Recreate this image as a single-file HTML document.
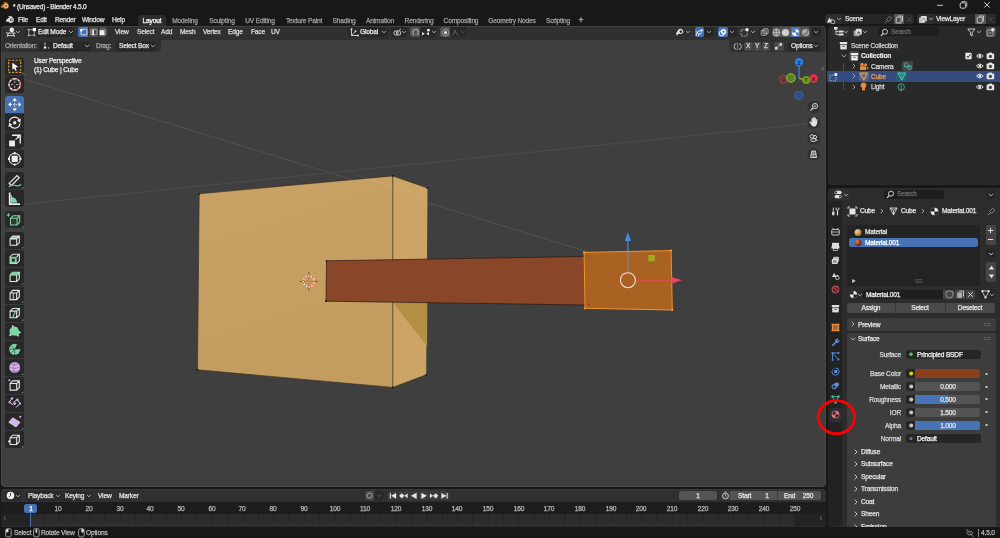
<!DOCTYPE html>
<html><head><meta charset="utf-8">
<style>
*{margin:0;padding:0;box-sizing:border-box}
html,body{width:1000px;height:538px;overflow:hidden;background:#181818;font-family:"Liberation Sans",sans-serif}
.a{position:absolute}
.t{position:absolute;white-space:nowrap;line-height:1;color:#e0e0e0;-webkit-text-stroke:0.25px currentColor;will-change:transform}
svg{position:absolute;overflow:visible}
</style></head><body>
<svg style="left:0px;top:0.2px;" width="9.8" height="9.8" viewBox="0 0 9.8 9.8"><g transform="scale(0.9800000000000001)"><path d="M1 6.2 L5 3 L3 3 L4 2.2 L6.6 2.4 L8.6 4.5 A3 3 0 1 1 3.2 7.4 L1.6 8.5 Z" fill="#e87d0d"/><circle cx="6.3" cy="6" r="1.8" fill="#fff"/><circle cx="6.3" cy="6" r="1.1" fill="#265787"/></g></svg>
<div class="t" style="left:12.50px;top:4.04px;font-size:6.44px;letter-spacing:-0.168px;color:#e8e8e8;">* (Unsaved) - Blender 4.5.0</div>
<svg style="left:936px;top:1.2px;" width="60" height="8" viewBox="0 0 60 8"><path d="M1.2 4.3 H7" stroke="#e0e0e0" stroke-width="0.9"/><rect x="24.2" y="1.8" width="5.4" height="5.4" rx="1.3" fill="none" stroke="#e0e0e0" stroke-width="0.9"/><path d="M25.6 0.6 H29.4 Q30.8 0.6 30.8 2 V5.8" fill="none" stroke="#e0e0e0" stroke-width="0.8"/><path d="M48.2 1.2 L53.6 6.6 M53.6 1.2 L48.2 6.6" stroke="#e0e0e0" stroke-width="0.9"/></svg>
<svg style="left:4.6px;top:13.6px;" width="9.8" height="9.8" viewBox="0 0 9.8 9.8"><g transform="scale(0.9800000000000001)"><path d="M1 6.2 L5 3 L3 3 L4 2.2 L6.6 2.4 L8.6 4.5 A3 3 0 1 1 3.2 7.4 L1.6 8.5 Z" fill="#e6e6e6"/><circle cx="6.3" cy="6" r="1.5" fill="#181818"/><circle cx="6.3" cy="6" r="0.8" fill="#e6e6e6"/></g></svg>
<div class="t" style="left:17.60px;top:16.76px;font-size:6.60px;letter-spacing:-0.172px;color:#e0e0e0;">File</div>
<div class="t" style="left:35.90px;top:16.76px;font-size:6.60px;letter-spacing:-0.172px;color:#e0e0e0;">Edit</div>
<div class="t" style="left:54.70px;top:16.76px;font-size:6.60px;letter-spacing:-0.172px;color:#e0e0e0;">Render</div>
<div class="t" style="left:81.60px;top:16.76px;font-size:6.60px;letter-spacing:-0.172px;color:#e0e0e0;">Window</div>
<div class="t" style="left:112.20px;top:16.76px;font-size:6.60px;letter-spacing:-0.172px;color:#e0e0e0;">Help</div>
<div class="a" style="left:138px;top:15px;width:28px;height:11px;background:#2c2c2c;border-radius:3px 3px 0 0;"></div>
<div class="t" style="left:2.00px;width:300px;text-align:center;top:18.06px;font-size:6.60px;letter-spacing:-0.172px;color:#ffffff;">Layout</div>
<div class="t" style="left:35.00px;width:300px;text-align:center;top:18.06px;font-size:6.60px;letter-spacing:-0.172px;color:#a0a0a0;">Modeling</div>
<div class="t" style="left:71.50px;width:300px;text-align:center;top:18.06px;font-size:6.60px;letter-spacing:-0.172px;color:#a0a0a0;">Sculpting</div>
<div class="t" style="left:110.00px;width:300px;text-align:center;top:18.06px;font-size:6.60px;letter-spacing:-0.172px;color:#a0a0a0;">UV Editing</div>
<div class="t" style="left:153.80px;width:300px;text-align:center;top:18.06px;font-size:6.60px;letter-spacing:-0.172px;color:#a0a0a0;">Texture Paint</div>
<div class="t" style="left:193.50px;width:300px;text-align:center;top:18.06px;font-size:6.60px;letter-spacing:-0.172px;color:#a0a0a0;">Shading</div>
<div class="t" style="left:230.00px;width:300px;text-align:center;top:18.06px;font-size:6.60px;letter-spacing:-0.172px;color:#a0a0a0;">Animation</div>
<div class="t" style="left:268.50px;width:300px;text-align:center;top:18.06px;font-size:6.60px;letter-spacing:-0.172px;color:#a0a0a0;">Rendering</div>
<div class="t" style="left:311.00px;width:300px;text-align:center;top:18.06px;font-size:6.60px;letter-spacing:-0.172px;color:#a0a0a0;">Compositing</div>
<div class="t" style="left:361.50px;width:300px;text-align:center;top:18.06px;font-size:6.60px;letter-spacing:-0.172px;color:#a0a0a0;">Geometry Nodes</div>
<div class="t" style="left:408.00px;width:300px;text-align:center;top:18.06px;font-size:6.60px;letter-spacing:-0.172px;color:#a0a0a0;">Scripting</div>
<div class="t" style="left:431.00px;width:300px;text-align:center;top:15.88px;font-size:8.52px;letter-spacing:-0.222px;color:#bdbdbd;">+</div>
<div class="a" style="left:824.5px;top:14px;width:89px;height:10px;background:#262626;border-radius:3px;"></div>
<div class="a" style="left:824.5px;top:14px;width:17px;height:10px;background:#2e2e2e;border-radius:3px 0 0 3px;"></div>
<svg style="left:826px;top:14.5px;" width="10" height="9" viewBox="0 0 10 9"><path d="M1 7.5 L3.2 2.5 L4.8 5 L5.8 3.8 L7 7.5 Z" fill="#ddd"/><circle cx="6.8" cy="6.8" r="1.9" fill="#262626" stroke="#ddd" stroke-width="0.8"/></svg>
<svg style="left:834.5px;top:15.3px;" width="8" height="8" viewBox="0 0 8 8"><path d="M2.4 3.2 L4 4.8 L5.6 3.2" fill="none" stroke="#ccc" stroke-width="0.8" stroke-linecap="round" stroke-linejoin="round"/></svg>
<svg style="left:884px;top:14.5px;" width="9" height="9" viewBox="0 0 9 9"><path d="M3 6 L1 8 M2.5 4.5 L4.5 6.5 L7.8 3.2 L5.8 1.2 Z" fill="none" stroke="#888" stroke-width="0.8"/></svg>
<div class="a" style="left:893.5px;top:14px;width:10.5px;height:10px;background:#545454;"></div>
<svg style="left:894.5px;top:14.5px;" width="9" height="9" viewBox="0 0 9 9"><rect x="1.2" y="2.2" width="5" height="5.8" rx="0.8" fill="none" stroke="#ddd" stroke-width="0.8"/><path d="M3 1 H7.5 V6.5" fill="none" stroke="#ddd" stroke-width="0.8"/></svg>
<div class="a" style="left:904px;top:14px;width:9.5px;height:10px;background:#2a2a2a;border-radius:0 3px 3px 0;"></div>
<svg style="left:904.5px;top:14.5px;" width="9" height="9" viewBox="0 0 9 9"><path d="M2.2 2.2 L6.8 6.8 M6.8 2.2 L2.2 6.8" stroke="#555" stroke-width="0.8"/></svg>
<div class="t" style="left:845.00px;top:15.96px;font-size:6.60px;letter-spacing:-0.172px;color:#e0e0e0;">Scene</div>
<div class="a" style="left:916.5px;top:14px;width:79px;height:10px;background:#262626;border-radius:3px;"></div>
<div class="a" style="left:916.5px;top:14px;width:17px;height:10px;background:#2e2e2e;border-radius:3px 0 0 3px;"></div>
<svg style="left:918px;top:14.5px;" width="10" height="9" viewBox="0 0 10 9"><rect x="1" y="2.5" width="6" height="5.5" rx="0.8" fill="#bbb"/><rect x="2.8" y="1" width="6" height="5.5" rx="0.8" fill="#ddd"/><path d="M3.5 5.5 L5.5 3.2 L8 5.5" fill="none" stroke="#555" stroke-width="0.8"/></svg>
<svg style="left:926.5px;top:15.3px;" width="8" height="8" viewBox="0 0 8 8"><path d="M2.4 3.2 L4 4.8 L5.6 3.2" fill="none" stroke="#ccc" stroke-width="0.8" stroke-linecap="round" stroke-linejoin="round"/></svg>
<div class="a" style="left:975px;top:14px;width:10.5px;height:10px;background:#545454;"></div>
<svg style="left:976px;top:14.5px;" width="9" height="9" viewBox="0 0 9 9"><rect x="1.2" y="2.2" width="5" height="5.8" rx="0.8" fill="none" stroke="#ddd" stroke-width="0.8"/><path d="M3 1 H7.5 V6.5" fill="none" stroke="#ddd" stroke-width="0.8"/></svg>
<div class="a" style="left:985.5px;top:14px;width:10px;height:10px;background:#2a2a2a;border-radius:0 3px 3px 0;"></div>
<svg style="left:986px;top:14.5px;" width="9" height="9" viewBox="0 0 9 9"><path d="M2.2 2.2 L6.8 6.8 M6.8 2.2 L2.2 6.8" stroke="#555" stroke-width="0.8"/></svg>
<div class="t" style="left:935.50px;top:15.96px;font-size:6.60px;letter-spacing:-0.172px;color:#e0e0e0;">ViewLayer</div>
<div class="a" style="left:1px;top:26px;width:825px;height:461px;background:#3f3f3f;border-radius:4px;overflow:hidden">
<div class="a" style="left:0px;top:0px;width:825px;height:13.5px;background:#303030;"></div>
<div class="a" style="left:0px;top:0px;width:825px;height:0.8px;background:#383838;"></div>
<div class="a" style="left:0px;top:13px;width:160px;height:13px;background:#303030;border-radius:0 0 4px 0;"></div>
<div class="a" style="left:728px;top:13px;width:97px;height:13px;background:#303030;border-radius:0 0 0 4px;"></div>
</div>
<svg style="left:0;top:0" width="1000" height="538" viewBox="0 0 1000 538"><line x1="25" y1="79.4" x2="600" y2="255.6" stroke="#555" stroke-width="0.8"/><line x1="1" y1="206.5" x2="825" y2="122.1" stroke="#4f4f4f" stroke-width="0.8"/><defs><linearGradient id="cf" x1="0" y1="0" x2="0.3" y2="1"><stop offset="0" stop-color="#c9a265"/><stop offset="1" stop-color="#c39d60"/></linearGradient></defs><polygon points="199.2,193.8 392.8,175.9 392.8,387.4 197.5,369.8" fill="url(#cf)"/><polygon points="392.8,175.9 427.5,188 426.2,374.8 392.8,387.4" fill="#cca466"/><polygon points="392.8,302.5 427.3,302.5 427.1,346 " fill="#b38e45"/><g stroke="#3a2e1c" stroke-width="0.7" fill="none" opacity="0.9"><polyline points="199.2,193.8 392.8,175.9 427.5,188"/><polyline points="197.5,369.8 392.8,387.4 426.2,374.8"/><line x1="392.8" y1="175.9" x2="392.8" y2="387.4"/><line x1="199.2" y1="193.8" x2="197.5" y2="369.8"/></g><g fill="#111"><circle cx="199.2" cy="193.8" r="0.9"/><circle cx="392.8" cy="175.9" r="0.9"/><circle cx="427.5" cy="188" r="0.9"/><circle cx="197.5" cy="369.8" r="0.9"/><circle cx="392.8" cy="387.4" r="0.9"/><circle cx="426.2" cy="374.8" r="0.9"/></g><line x1="356" y1="175" x2="427.5" y2="197" stroke="#fff" stroke-width="0.6" opacity="0.12"/><polygon points="326.5,260.8 584.5,256.5 585,305 326,301.2" fill="#8a4629"/><g stroke="#2a1a10" stroke-width="0.7" fill="none"><line x1="326.5" y1="260.8" x2="584.5" y2="256.5"/><line x1="326" y1="301.2" x2="585" y2="305"/><line x1="326.5" y1="260.8" x2="326" y2="301.2"/></g><g fill="#111"><circle cx="326.5" cy="260.8" r="0.9"/><circle cx="326" cy="301.2" r="0.9"/></g><polygon points="584.1,252.4 671.1,250.6 672.3,310 585,308.3" fill="#aa6222" stroke="#f39228" stroke-width="1"/><g fill="#ff9a30"><circle cx="584.1" cy="252.4" r="1.1"/><circle cx="671.1" cy="250.6" r="1.1"/><circle cx="672.3" cy="310" r="1.1"/><circle cx="585" cy="308.3" r="1.1"/></g><circle cx="588.5" cy="256" r="0.5" fill="#222"/><circle cx="589" cy="304.5" r="0.5" fill="#222"/><rect x="648.2" y="255" width="6.8" height="6.2" fill="#a2a61c"/><line x1="627.9" y1="272" x2="627.9" y2="240" stroke="#6b8fd6" stroke-width="1"/><polygon points="627.9,232 624.8,241 631,241" fill="#3d8ce8"/><line x1="636" y1="280.2" x2="672" y2="280.2" stroke="#e84a5f" stroke-width="1"/><polygon points="682,280.2 671.5,277 671.5,283.4" fill="#ec4660"/><circle cx="627.9" cy="280.2" r="7.5" fill="none" stroke="#ecdcd8" stroke-width="1.1"/><g><path d="M308.8 272 V277.5 M308.8 285.3 V291 M299.6 281.4 H304.8 M312.8 281.4 H318" stroke="#5e4a2a" stroke-width="0.8"/><path d="M308.8 277.5 V285.3 M304.8 281.4 H312.8" stroke="#5e4a2a" stroke-width="0.5" opacity="0.6"/><circle cx="308.8" cy="281.4" r="5.4" fill="none" stroke="#f4f0ec" stroke-width="1.3"/><circle cx="308.8" cy="281.4" r="5.4" fill="none" stroke="#e8552a" stroke-width="1.3" stroke-dasharray="1.41 1.41"/><circle cx="308.8" cy="281.4" r="1" fill="#f08a20"/></g><line x1="799" y1="78.5" x2="799" y2="66" stroke="#3f83e0" stroke-width="1.2"/><line x1="799" y1="78.5" x2="810" y2="78.5" stroke="#e0405a" stroke-width="1.2"/><line x1="799" y1="78.5" x2="803" y2="79.5" stroke="#80c020" stroke-width="1.2"/><circle cx="783.7" cy="79.2" r="4" fill="#5a3a3f" stroke="#c23a4a" stroke-width="0.9"/><circle cx="798.7" cy="95.3" r="4.1" fill="#2f5182" stroke="#3a6cb8" stroke-width="0.8"/><circle cx="790.9" cy="78" r="4.3" fill="#5e7a2e" stroke="#8ccf1a" stroke-width="1"/><circle cx="806.2" cy="80" r="4" fill="#6aa01a"/><circle cx="813.6" cy="78.5" r="4.2" fill="#e2334f"/><circle cx="799" cy="62.2" r="4.2" fill="#2f7fe0"/><text x="813.6" y="80.8" font-size="6" font-family="Liberation Sans" font-weight="bold" fill="#3a0a10" text-anchor="middle">X</text><text x="806.2" y="82.2" font-size="5.5" font-family="Liberation Sans" font-weight="bold" fill="#1f3000" text-anchor="middle">Y</text><text x="799" y="64.5" font-size="6" font-family="Liberation Sans" font-weight="bold" fill="#0a1a30" text-anchor="middle">Z</text><circle cx="813.6" cy="107.2" r="6.2" fill="#2f2f2f" opacity="0.85"/><circle cx="813.6" cy="122.6" r="6.2" fill="#2f2f2f" opacity="0.85"/><circle cx="813.6" cy="138.3" r="6.2" fill="#2f2f2f" opacity="0.85"/><circle cx="813.6" cy="154.3" r="6.2" fill="#2f2f2f" opacity="0.85"/><circle cx="815" cy="106" r="2.6" fill="none" stroke="#ddd" stroke-width="0.9"/><line x1="813" y1="108" x2="810.5" y2="110.5" stroke="#ddd" stroke-width="1.1"/><path d="M815 104.7 V107.3 M813.7 106 H816.3" stroke="#ddd" stroke-width="0.6"/><path d="M811.2 124.8 L809.6 122.4 Q809.2 121.4 810.2 121.3 L811.5 122.6 L811.5 118.6 Q811.7 117.8 812.4 118 Q812.9 118.2 812.9 118.8 L813 121.2 L813 117.6 Q813.3 116.9 813.9 117 Q814.4 117.2 814.4 117.8 L814.4 121.2 L814.6 118.1 Q814.9 117.4 815.5 117.6 Q815.9 117.8 815.9 118.4 L815.9 121.6 L816.3 119.4 Q816.7 118.8 817.2 119 Q817.6 119.3 817.5 119.9 L817 124 Q816.4 126.6 814 126.8 Q812.3 126.8 811.2 124.8 Z" fill="#e0e0e0"/><circle cx="812" cy="136.5" r="1.8" fill="none" stroke="#ddd" stroke-width="0.9"/><circle cx="815" cy="137" r="1.6" fill="none" stroke="#ddd" stroke-width="0.9"/><rect x="811" y="138.8" width="4.5" height="2.6" rx="0.6" fill="none" stroke="#ddd" stroke-width="0.9"/><path d="M815.5 140.1 L817.2 139 V141.3 Z" fill="#ddd"/><path d="M810.6 157.5 L811.8 151 H815.4 L816.6 157.5 Z" fill="none" stroke="#ddd" stroke-width="0.9"/><path d="M811.2 154.2 H816 M813.6 151 V157.5 M812.4 151 L812 157.5 M814.8 151 L815.2 157.5" stroke="#ddd" stroke-width="0.6"/><path d="M823.8 66.8 L822 68.6 L823.8 70.4" fill="none" stroke="#9a9a9a" stroke-width="0.8"/></svg>
<div class="a" style="left:1px;top:26px;width:825px;height:461px;border:1px solid rgba(255,255,255,0.055);border-radius:4px"></div>
<div class="t" style="left:33.90px;top:57.96px;font-size:6.60px;letter-spacing:-0.172px;color:#f0f0f0;">User Perspective</div>
<div class="t" style="left:33.90px;top:67.26px;font-size:6.60px;letter-spacing:-0.172px;color:#f0f0f0;">(1) Cube | Cube</div>
<svg style="left:5px;top:27px;" width="16" height="10" viewBox="0 0 16 10"><circle cx="6.8" cy="2.9" r="2.3" fill="#e6e6e6"/><path d="M1 6 H10.5 M2.2 8.6 H9.6 M3.4 6 L2.2 9.8 M8.2 6 L9.4 9.8" stroke="#e6e6e6" stroke-width="0.9" fill="none"/></svg>
<svg style="left:13.5px;top:28.299999999999997px;" width="8" height="8" viewBox="0 0 8 8"><path d="M2.2 3.1 L4 4.9 L5.8 3.1" fill="none" stroke="#ccc" stroke-width="0.8" stroke-linecap="round" stroke-linejoin="round"/></svg>
<div class="a" style="left:24.8px;top:27px;width:49.6px;height:10px;background:#272727;border-radius:2.5px;"></div>
<svg style="left:27px;top:27.5px;" width="9" height="9" viewBox="0 0 9 9"><rect x="1.6" y="1.6" width="5.8" height="5.8" rx="2.4" fill="none" stroke="#a8a8a8" stroke-width="0.9"/><circle cx="1.6" cy="7.4" r="1.1" fill="#a8a8a8"/><circle cx="1.6" cy="1.6" r="1.1" fill="#a8a8a8"/><circle cx="7.4" cy="7.4" r="1.1" fill="#a8a8a8"/><rect x="5.8" y="0" width="3.2" height="3.2" fill="#fff"/></svg>
<div class="t" style="left:37.60px;top:28.96px;font-size:6.60px;letter-spacing:-0.172px;color:#e6e6e6;">Edit Mode</div>
<svg style="left:66.5px;top:28.299999999999997px;" width="8" height="8" viewBox="0 0 8 8"><path d="M2.2 3.1 L4 4.9 L5.8 3.1" fill="none" stroke="#ccc" stroke-width="0.8" stroke-linecap="round" stroke-linejoin="round"/></svg>
<div class="a" style="left:78.4px;top:27px;width:29.1px;height:10px;background:#4a4a4a;border-radius:2.5px;"></div>
<div class="a" style="left:78.4px;top:27px;width:9.5px;height:10px;background:#4772b3;border-radius:2.5px 0 0 2.5px;"></div>
<div class="a" style="left:88px;top:27px;width:0.6px;height:10px;background:#303030;"></div>
<div class="a" style="left:97.8px;top:27px;width:0.6px;height:10px;background:#303030;"></div>
<svg style="left:79.5px;top:28px;" width="8" height="8" viewBox="0 0 8 8"><rect x="1" y="1.3" width="6" height="5.5" rx="0.8" fill="none" stroke="#e8eef8" stroke-width="0.8"/><rect x="0.2" y="1.2" width="2.2" height="2.2" fill="#fff"/></svg>
<svg style="left:89.5px;top:28px;" width="8" height="8" viewBox="0 0 8 8"><rect x="1" y="1.3" width="6" height="5.5" rx="0.8" fill="none" stroke="#bbb" stroke-width="0.8"/><rect x="2.4" y="2" width="1.5" height="5" fill="#fff"/></svg>
<svg style="left:99px;top:28px;" width="8" height="8" viewBox="0 0 8 8"><rect x="1.3" y="1" width="5.7" height="5.7" rx="0.8" fill="none" stroke="#888" stroke-width="0.8"/><rect x="0.6" y="2.2" width="5" height="5" fill="#eee"/></svg>
<div class="t" style="left:115.00px;top:28.96px;font-size:6.60px;letter-spacing:-0.172px;color:#dcdcdc;">View</div>
<div class="t" style="left:136.50px;top:28.96px;font-size:6.60px;letter-spacing:-0.172px;color:#dcdcdc;">Select</div>
<div class="t" style="left:160.60px;top:28.96px;font-size:6.60px;letter-spacing:-0.172px;color:#dcdcdc;">Add</div>
<div class="t" style="left:180.00px;top:28.96px;font-size:6.60px;letter-spacing:-0.172px;color:#dcdcdc;">Mesh</div>
<div class="t" style="left:202.80px;top:28.96px;font-size:6.60px;letter-spacing:-0.172px;color:#dcdcdc;">Vertex</div>
<div class="t" style="left:228.40px;top:28.96px;font-size:6.60px;letter-spacing:-0.172px;color:#dcdcdc;">Edge</div>
<div class="t" style="left:250.80px;top:28.96px;font-size:6.60px;letter-spacing:-0.172px;color:#dcdcdc;">Face</div>
<div class="t" style="left:270.80px;top:28.96px;font-size:6.60px;letter-spacing:-0.172px;color:#dcdcdc;">UV</div>
<div class="a" style="left:348px;top:27px;width:39.5px;height:10px;background:#272727;border-radius:2.5px;"></div>
<svg style="left:349.5px;top:27.5px;" width="9" height="9" viewBox="0 0 9 9"><path d="M1.5 1 V7.5 H8" fill="none" stroke="#ddd" stroke-width="0.9"/><path d="M1.5 7.5 L5.5 3.5" stroke="#ddd" stroke-width="0.8"/><circle cx="1.5" cy="1.2" r="1" fill="#ddd"/><circle cx="8" cy="7.5" r="1" fill="#ddd"/><circle cx="5.5" cy="3.3" r="1" fill="#ddd"/></svg>
<div class="t" style="left:360.40px;top:28.96px;font-size:6.60px;letter-spacing:-0.172px;color:#e6e6e6;">Global</div>
<svg style="left:380.3px;top:28.299999999999997px;" width="8" height="8" viewBox="0 0 8 8"><path d="M2.2 3.1 L4 4.9 L5.8 3.1" fill="none" stroke="#ccc" stroke-width="0.8" stroke-linecap="round" stroke-linejoin="round"/></svg>
<div class="a" style="left:391px;top:27px;width:16px;height:10px;background:#272727;border-radius:2.5px;"></div>
<svg style="left:392.5px;top:27.5px;" width="9" height="9" viewBox="0 0 9 9"><circle cx="3" cy="5" r="2.2" fill="none" stroke="#ddd" stroke-width="0.9"/><circle cx="5.6" cy="5" r="2.2" fill="none" stroke="#ddd" stroke-width="0.9"/><path d="M6 2.5 L8 0.8" stroke="#ddd" stroke-width="0.8"/></svg>
<svg style="left:399.6px;top:28.299999999999997px;" width="8" height="8" viewBox="0 0 8 8"><path d="M2.4 3.2 L4 4.8 L5.6 3.2" fill="none" stroke="#ccc" stroke-width="0.8" stroke-linecap="round" stroke-linejoin="round"/></svg>
<div class="a" style="left:410px;top:27px;width:26px;height:10px;background:#272727;border-radius:2.5px;"></div>
<div class="a" style="left:410px;top:27px;width:10px;height:10px;background:#545454;border-radius:2.5px 0 0 2.5px;"></div>
<svg style="left:410.8px;top:27.8px;" width="9" height="9" viewBox="0 0 9 9"><path d="M2 6.5 V4 A2.6 2.6 0 0 1 7.2 4 V6.5" fill="none" stroke="#9a9a9a" stroke-width="1.4"/><path d="M2 6.5 H3.2 M6 6.5 H7.2" stroke="#9a9a9a" stroke-width="1.4"/></svg>
<svg style="left:421px;top:27.5px;" width="10" height="9" viewBox="0 0 10 9"><path d="M1 4 L1 7.5 L3.8 5.7 Z M8 4 L8 7.5 L5.2 5.7 Z" fill="#e6e6e6"/><rect x="6.2" y="1" width="2.4" height="2.4" fill="#fff"/></svg>
<svg style="left:429.7px;top:28.299999999999997px;" width="8" height="8" viewBox="0 0 8 8"><path d="M2.4 3.2 L4 4.8 L5.6 3.2" fill="none" stroke="#ccc" stroke-width="0.8" stroke-linecap="round" stroke-linejoin="round"/></svg>
<div class="a" style="left:440px;top:27px;width:26px;height:10px;background:#272727;border-radius:2.5px;"></div>
<div class="a" style="left:440px;top:27px;width:10px;height:10px;background:#545454;border-radius:2.5px 0 0 2.5px;"></div>
<svg style="left:440.5px;top:27.5px;" width="9" height="9" viewBox="0 0 9 9"><circle cx="4.5" cy="4.5" r="3.2" fill="none" stroke="#aaa" stroke-width="0.8"/><circle cx="4.5" cy="4.5" r="1.5" fill="#eee"/></svg>
<svg style="left:451px;top:27.5px;" width="9" height="9" viewBox="0 0 9 9"><path d="M0.8 7.5 Q3 7.4 4 2 Q5 7.4 7.8 7.5" fill="none" stroke="#6a6a6a" stroke-width="0.8"/></svg>
<svg style="left:458.5px;top:28.299999999999997px;" width="8" height="8" viewBox="0 0 8 8"><path d="M2.4 3.2 L4 4.8 L5.6 3.2" fill="none" stroke="#555" stroke-width="0.8" stroke-linecap="round" stroke-linejoin="round"/></svg>
<svg style="left:675px;top:27px;" width="16" height="10" viewBox="0 0 16 10"><path d="M1 6.5 L3 3.2 Q4.5 1.4 6.5 2 Q8.8 2.8 8.2 5.2 Q7.6 7 5.3 7 L3.2 6.8 L2 9 Z" fill="#e6e6e6"/><circle cx="5.8" cy="4.6" r="1.3" fill="#303030"/></svg>
<svg style="left:684px;top:28.299999999999997px;" width="8" height="8" viewBox="0 0 8 8"><path d="M2.4 3.2 L4 4.8 L5.6 3.2" fill="none" stroke="#ccc" stroke-width="0.8" stroke-linecap="round" stroke-linejoin="round"/></svg>
<div class="a" style="left:694.8px;top:27px;width:9.6px;height:10px;background:#4772b3;border-radius:2px;"></div>
<svg style="left:695.3px;top:27.5px;" width="9" height="9" viewBox="0 0 9 9"><path d="M1.2 8 Q1.2 3 6.2 2.5 M3.4 8 Q3.5 5 6.8 5 M1 3.2 L3.8 6.6" fill="none" stroke="#e8f0ff" stroke-width="0.9"/><path d="M5.8 0.9 L8.3 2.2 L6.4 3.9 Z" fill="#fff"/></svg>
<div class="a" style="left:704.4px;top:27px;width:9.6px;height:10px;background:#272727;border-radius:0 2px 2px 0;"></div>
<svg style="left:705.2px;top:28.299999999999997px;" width="8" height="8" viewBox="0 0 8 8"><path d="M2.4 3.2 L4 4.8 L5.6 3.2" fill="none" stroke="#ccc" stroke-width="0.8" stroke-linecap="round" stroke-linejoin="round"/></svg>
<div class="a" style="left:718px;top:27px;width:9.6px;height:10px;background:#4772b3;border-radius:2px;"></div>
<svg style="left:718.3px;top:27.5px;" width="9" height="9" viewBox="0 0 9 9"><circle cx="5.6" cy="3.8" r="2.8" fill="#e8f0ff"/><circle cx="3.6" cy="5.4" r="2.5" fill="none" stroke="#e8f0ff" stroke-width="1"/><circle cx="5.6" cy="3.8" r="1" fill="#4772b3"/></svg>
<div class="a" style="left:727.6px;top:27px;width:9px;height:10px;background:#272727;border-radius:0 2px 2px 0;"></div>
<svg style="left:728.2px;top:28.299999999999997px;" width="8" height="8" viewBox="0 0 8 8"><path d="M2.4 3.2 L4 4.8 L5.6 3.2" fill="none" stroke="#ccc" stroke-width="0.8" stroke-linecap="round" stroke-linejoin="round"/></svg>
<svg style="left:739.6px;top:27.5px;" width="16" height="9" viewBox="0 0 16 9"><rect x="1" y="1.8" width="6.2" height="6.2" rx="0.6" fill="none" stroke="#bbb" stroke-width="0.9" stroke-dasharray="2 1"/><rect x="5.6" y="0.2" width="2.8" height="2.8" fill="#fff"/></svg>
<svg style="left:748.5px;top:28.299999999999997px;" width="8" height="8" viewBox="0 0 8 8"><path d="M2.4 3.2 L4 4.8 L5.6 3.2" fill="none" stroke="#ccc" stroke-width="0.8" stroke-linecap="round" stroke-linejoin="round"/></svg>
<div class="a" style="left:758.8px;top:27px;width:9.4px;height:10px;background:#272727;border-radius:2px;"></div>
<svg style="left:759.5px;top:27.5px;" width="9" height="9" viewBox="0 0 9 9"><rect x="1.2" y="2.4" width="5" height="5" rx="0.6" fill="none" stroke="#bbb" stroke-width="0.8"/><rect x="3" y="0.8" width="5" height="5" rx="0.6" fill="none" stroke="#ddd" stroke-width="0.8"/><rect x="3" y="2.4" width="3.2" height="3.4" fill="#888" opacity="0.6"/></svg>
<div class="a" style="left:771.6px;top:27px;width:38.4px;height:10px;background:#545454;border-radius:2.5px;"></div>
<div class="a" style="left:790.8px;top:27px;width:9.6px;height:10px;background:#4772b3;"></div>
<svg style="left:772px;top:27.5px;" width="9" height="9" viewBox="0 0 9 9"><circle cx="4.5" cy="4.5" r="3.4" fill="none" stroke="#ccc" stroke-width="0.8"/><path d="M1.1 4.5 H7.9 M4.5 1.1 V7.9" stroke="#ccc" stroke-width="0.7"/><ellipse cx="4.5" cy="4.5" rx="1.6" ry="3.4" fill="none" stroke="#ccc" stroke-width="0.6"/></svg>
<svg style="left:781.2px;top:27.5px;" width="9" height="9" viewBox="0 0 9 9"><circle cx="4.5" cy="4.5" r="3.6" fill="#d0d0d0"/></svg>
<svg style="left:791.2px;top:27.5px;" width="9" height="9" viewBox="0 0 9 9"><circle cx="4.5" cy="4.5" r="3.6" fill="#f0f4ff"/><path d="M4.5 0.9 A3.6 3.6 0 0 0 1 4.6 L4.5 4.5 Z" fill="#4772b3"/><path d="M4.5 4.5 L8.1 4.5 A3.6 3.6 0 0 1 6 7.8 Z" fill="#4772b3"/></svg>
<svg style="left:800.6px;top:27.5px;" width="9" height="9" viewBox="0 0 9 9"><circle cx="4.5" cy="4.5" r="3.6" fill="#a8a8a8"/><path d="M2.5 6.8 Q6.5 6 6.8 2.2" fill="none" stroke="#6a6a6a" stroke-width="1.2"/></svg>
<div class="a" style="left:811.6px;top:27px;width:9px;height:10px;background:#272727;border-radius:2px;"></div>
<svg style="left:812.1px;top:28.299999999999997px;" width="8" height="8" viewBox="0 0 8 8"><path d="M2.4 3.2 L4 4.8 L5.6 3.2" fill="none" stroke="#ccc" stroke-width="0.8" stroke-linecap="round" stroke-linejoin="round"/></svg>
<div class="t" style="left:4.80px;top:42.96px;font-size:6.60px;letter-spacing:-0.172px;color:#a8a8a8;">Orientation:</div>
<div class="a" style="left:40px;top:41.5px;width:50.4px;height:9px;background:#272727;border-radius:2.5px;"></div>
<svg style="left:42px;top:41.5px;" width="9" height="9" viewBox="0 0 9 9"><circle cx="3" cy="1.5" r="1" fill="#999"/><path d="M3 2 V5" stroke="#999" stroke-width="0.7"/><circle cx="3" cy="5.5" r="1.2" fill="#eee"/><circle cx="6.5" cy="5.8" r="0.9" fill="#999"/><path d="M1.5 7.5 L2.5 6.3" stroke="#999" stroke-width="0.7"/></svg>
<div class="t" style="left:52.80px;top:42.96px;font-size:6.60px;letter-spacing:-0.172px;color:#e6e6e6;">Default</div>
<svg style="left:83.2px;top:42.3px;" width="8" height="8" viewBox="0 0 8 8"><path d="M2.2 3.1 L4 4.9 L5.8 3.1" fill="none" stroke="#ccc" stroke-width="0.8" stroke-linecap="round" stroke-linejoin="round"/></svg>
<div class="t" style="left:95.70px;top:42.96px;font-size:6.60px;letter-spacing:-0.172px;color:#a8a8a8;">Drag:</div>
<div class="a" style="left:116px;top:41.5px;width:40px;height:9px;background:#272727;border-radius:2.5px;"></div>
<div class="t" style="left:119.20px;top:42.96px;font-size:6.60px;letter-spacing:-0.172px;color:#e6e6e6;">Select Box</div>
<svg style="left:148.8px;top:42.3px;" width="8" height="8" viewBox="0 0 8 8"><path d="M2.2 3.1 L4 4.9 L5.8 3.1" fill="none" stroke="#ccc" stroke-width="0.8" stroke-linecap="round" stroke-linejoin="round"/></svg>
<svg style="left:733px;top:41.5px;" width="10" height="9" viewBox="0 0 10 9"><path d="M4.7 1 V8" stroke="#bbb" stroke-width="0.6"/><path d="M3.5 1.5 Q0.8 2 1.2 4.5 Q0.8 7 3.5 7.5 M6 1.5 Q8.6 2 8.2 4.5 Q8.6 7 6 7.5" fill="none" stroke="#ccc" stroke-width="0.9"/></svg>
<div class="a" style="left:744px;top:41.5px;width:26px;height:9px;background:#4a4a4a;border-radius:2px;"></div>
<div class="a" style="left:752.6px;top:41.5px;width:0.6px;height:9px;background:#303030;"></div>
<div class="a" style="left:761.3px;top:41.5px;width:0.6px;height:9px;background:#303030;"></div>
<div class="t" style="left:598.30px;width:300px;text-align:center;top:42.96px;font-size:6.60px;letter-spacing:-0.172px;color:#ddd;">X</div>
<div class="t" style="left:607.00px;width:300px;text-align:center;top:42.96px;font-size:6.60px;letter-spacing:-0.172px;color:#ddd;">Y</div>
<div class="t" style="left:615.70px;width:300px;text-align:center;top:42.96px;font-size:6.60px;letter-spacing:-0.172px;color:#ddd;">Z</div>
<div class="a" style="left:774px;top:41.5px;width:9.6px;height:9px;background:#4a4a4a;border-radius:2px;"></div>
<svg style="left:774.3px;top:41.5px;" width="9" height="9" viewBox="0 0 9 9"><rect x="1" y="5" width="2.5" height="2.5" fill="#ddd"/><rect x="5.5" y="1.2" width="2.5" height="2.5" fill="#ddd"/><path d="M2.5 5 L6.5 3" stroke="#ddd" stroke-width="0.7" stroke-dasharray="1 0.7"/></svg>
<div class="a" style="left:787.6px;top:41.5px;width:32.8px;height:9px;background:#272727;border-radius:2.5px;"></div>
<div class="t" style="left:791.00px;top:42.96px;font-size:6.60px;letter-spacing:-0.172px;color:#e6e6e6;">Options</div>
<svg style="left:811.8px;top:42.3px;" width="8" height="8" viewBox="0 0 8 8"><path d="M2.2 3.1 L4 4.9 L5.8 3.1" fill="none" stroke="#ccc" stroke-width="0.8" stroke-linecap="round" stroke-linejoin="round"/></svg>
<div class="a" style="left:5.3px;top:57.7px;width:19px;height:35.3px;background:#282828;border-radius:3px;"></div>
<div class="a" style="left:5.3px;top:74.9px;width:19px;height:0.9px;background:#3a3a3a;"></div>
<div class="a" style="left:5.3px;top:96.0px;width:19px;height:71.5px;background:#282828;border-radius:3px;"></div>
<div class="a" style="left:5.3px;top:113.2px;width:19px;height:0.9px;background:#3a3a3a;"></div>
<div class="a" style="left:5.3px;top:131.3px;width:19px;height:0.9px;background:#3a3a3a;"></div>
<div class="a" style="left:5.3px;top:149.4px;width:19px;height:0.9px;background:#3a3a3a;"></div>
<div class="a" style="left:5.3px;top:172.2px;width:19px;height:35.3px;background:#282828;border-radius:3px;"></div>
<div class="a" style="left:5.3px;top:189.4px;width:19px;height:0.9px;background:#3a3a3a;"></div>
<div class="a" style="left:5.3px;top:211.3px;width:19px;height:17.2px;background:#282828;border-radius:3px;"></div>
<div class="a" style="left:5.3px;top:232.1px;width:19px;height:216.3px;background:#282828;border-radius:3px;"></div>
<div class="a" style="left:5.3px;top:249.3px;width:19px;height:0.9px;background:#3a3a3a;"></div>
<div class="a" style="left:5.3px;top:267.4px;width:19px;height:0.9px;background:#3a3a3a;"></div>
<div class="a" style="left:5.3px;top:285.5px;width:19px;height:0.9px;background:#3a3a3a;"></div>
<div class="a" style="left:5.3px;top:303.6px;width:19px;height:0.9px;background:#3a3a3a;"></div>
<div class="a" style="left:5.3px;top:321.7px;width:19px;height:0.9px;background:#3a3a3a;"></div>
<div class="a" style="left:5.3px;top:339.8px;width:19px;height:0.9px;background:#3a3a3a;"></div>
<div class="a" style="left:5.3px;top:357.9px;width:19px;height:0.9px;background:#3a3a3a;"></div>
<div class="a" style="left:5.3px;top:376.0px;width:19px;height:0.9px;background:#3a3a3a;"></div>
<div class="a" style="left:5.3px;top:394.1px;width:19px;height:0.9px;background:#3a3a3a;"></div>
<div class="a" style="left:5.3px;top:412.2px;width:19px;height:0.9px;background:#3a3a3a;"></div>
<div class="a" style="left:5.3px;top:430.3px;width:19px;height:0.9px;background:#3a3a3a;"></div>
<div class="a" style="left:5.3px;top:96.0px;width:19px;height:17.2px;background:#4772b3;border-radius:3px 3px 0 0;"></div>
<svg style="left:0;top:0" width="1000" height="538" viewBox="0 0 1000 538"><g transform="translate(14.7 66.30) scale(1.32)"><rect x="-4.6" y="-4.6" width="9.2" height="9.2" fill="none" stroke="#d99a3a" stroke-width="0.9" stroke-dasharray="1.6 1"/><path d="M-1.8 -2.6 L2.8 0.6 L0.6 0.9 L1.5 3 L0.5 3.4 L-0.4 1.4 L-1.8 2.6 Z" fill="#fff"/><path d="M7.5 6.8 L8.5 6.8 L8.5 5.8 Z" fill="#999"/></g><g transform="translate(14.7 84.40) scale(1.32)"><circle r="4.3" fill="none" stroke="#fff" stroke-width="1"/><circle r="4.3" fill="none" stroke="#e04040" stroke-width="1" stroke-dasharray="1.7 1.7"/><path d="M0 -2.8 V-1 M0 1 V2.8 M-2.8 0 H-1 M1 0 H2.8" stroke="#ccc" stroke-width="0.6"/></g><g transform="translate(14.7 104.60) scale(1.32)"><path d="M0 -3.2 V3.2 M-3.2 0 H3.2" stroke="#fff" stroke-width="0.6" stroke-dasharray="1.1 0.8"/><path d="M0 -5 L-1.7 -2.9 H1.7 Z M0 5 L-1.7 2.9 H1.7 Z M-5 0 L-2.9 -1.7 V1.7 Z M5 0 L2.9 -1.7 V1.7 Z" fill="#fff"/></g><g transform="translate(14.7 122.70) scale(1.32)"><path d="M-4 -0.6 A4 4 0 0 1 3.4 -2.2 M4 0.6 A4 4 0 0 1 -3.4 2.2" fill="none" stroke="#eee" stroke-width="0.9"/><path d="M4.6 -3.4 L4.3 0.2 L1.8 -1.6 Z M-4.6 3.4 L-4.3 -0.2 L-1.8 1.6 Z" fill="#eee"/><circle r="1.3" fill="#eee"/></g><g transform="translate(14.7 140.80) scale(1.32)"><rect x="-4.2" y="-0.2" width="4.4" height="4.4" fill="#eee"/><path d="M-2 -4.2 H4.2 V2" fill="none" stroke="#eee" stroke-width="1"/><path d="M0.6 -0.8 L3.2 -3.4" stroke="#eee" stroke-width="0.8"/><path d="M3.6 -3.6 L1.6 -3.4 L3.4 -1.6 Z" fill="#eee"/></g><g transform="translate(14.7 158.90) scale(1.32)"><circle r="4.3" fill="none" stroke="#ddd" stroke-width="0.8"/><g fill="#eee"><circle cx="0" cy="-4.3" r="0.9"/><circle cx="0" cy="4.3" r="0.9"/><circle cx="-4.3" cy="0" r="0.9"/><circle cx="4.3" cy="0" r="0.9"/></g><rect x="-2.3" y="-2.3" width="4.6" height="4.6" rx="0.5" fill="#eee"/></g><g transform="translate(14.7 180.80) scale(1.32)"><path d="M-4.2 2 L1.8 -4 L3.4 -2.4 L-2.6 3.6 Z" fill="none" stroke="#eee" stroke-width="0.9"/><path d="M-4.6 4.6 Q-1.6 2.4 0.6 3.6 Q2.6 4.6 4.8 2.8" fill="none" stroke="#7fd3a6" stroke-width="0.8"/></g><g transform="translate(14.7 198.90) scale(1.32)"><path d="M-3.8 -4.8 V4 H4" fill="none" stroke="#eee" stroke-width="1.3"/><path d="M-2.6 2.9 V-1.5 A4.4 4.4 0 0 1 1.8 2.9 Z" fill="#7fd3a6"/><path d="M-2.6 2.9 L-2.6 -3" stroke="#eee" stroke-width="0.6"/></g><g transform="translate(14.7 219.90) scale(1.32)"><path d="M-3.2 -1.2 L-1.2 -3.2 H3.8 V1.8 L1.8 3.8 H-3.2 Z" fill="#2c3a33" stroke="#7fd3a6" stroke-width="0.8"/><path d="M-3.2 -1.2 H1.8 V3.8 M1.8 -1.2 L3.8 -3.2" fill="none" stroke="#7fd3a6" stroke-width="0.8"/><path d="M-4.8 -5 V-2.4 M-6.1 -3.7 H-3.5" stroke="#7fd3a6" stroke-width="0.8"/></g><g transform="translate(14.7 240.70) scale(1.32)"><path d="M-3.5 -1 L-1.5 -3.5 H3.5 L1.5 -1 Z" fill="#7fd3a6"/><path d="M-3.5 0 L-3.5 -1.5 L-1.5 -3.5 H3.5 V1.5 L1.5 3.5 H-3.5 Z M-3.5 -1.5 H1.5 V3.5 M1.5 -1.5 L3.5 -3.5" fill="none" stroke="#e6e6e6" stroke-width="0.8"/></g><g transform="translate(14.7 258.80) scale(1.32)"><path d="M-3.5 -1.5 L-1.5 -3.5 H3.5 V1.5 L1.5 3.5 H-3.5 Z" fill="none" stroke="#e6e6e6" stroke-width="0.8"/><rect x="-3.5" y="-1.5" width="5" height="5" fill="#7fd3a6"/><rect x="-2.1" y="-0.1" width="2.2" height="2.2" fill="#282828"/><path d="M1.5 -1.5 L3.5 -3.5" stroke="#e6e6e6" stroke-width="0.8"/></g><g transform="translate(14.7 276.90) scale(1.32)"><path d="M-3.5 -1.5 L-1.5 -3.5 H3.5 V1.5 L1.5 3.5 H-3.5 Z M-3.5 -1.5 H1.5 V3.5 M1.5 -1.5 L3.5 -3.5" fill="none" stroke="#e6e6e6" stroke-width="0.8"/><path d="M-3.5 -1.5 L-1.5 -3.5 H1.5 Q3.5 -3.5 3.5 -1 L1.5 -1.5 Z" fill="#7fd3a6"/></g><g transform="translate(14.7 295.00) scale(1.32)"><path d="M-3.5 -1.5 L-1.5 -3.5 H3.5 V1.5 L1.5 3.5 H-3.5 Z M-3.5 -1.5 H1.5 V3.5 M1.5 -1.5 L3.5 -3.5" fill="none" stroke="#e6e6e6" stroke-width="0.8"/><path d="M-1 -1.5 V3.5" stroke="#7fd3a6" stroke-width="0.9"/></g><g transform="translate(14.7 313.10) scale(1.32)"><path d="M-3.5 -1.5 L-1.5 -3.5 H3.5 V1.5 L1.5 3.5 H-3.5 Z M-3.5 -1.5 H1.5 V3.5 M1.5 -1.5 L3.5 -3.5" fill="none" stroke="#e6e6e6" stroke-width="0.8"/><path d="M-1.5 3.5 L0.5 -1.5" stroke="#7fd3a6" stroke-width="0.9"/><circle cx="1" cy="-3.6" r="0.7" fill="#7fd3a6"/></g><g transform="translate(14.7 331.20) scale(1.32)"><path d="M-3.5 3 L-4 -1 L-1.5 -4 L2 -3 L4 1 L2.5 3.5 Z" fill="#7fd3a6"/><g fill="#fff"><circle cx="-3.5" cy="3" r="0.6"/><circle cx="-1.5" cy="-4" r="0.6"/><circle cx="4" cy="1" r="0.6"/><circle cx="2.5" cy="3.5" r="0.6"/></g></g><g transform="translate(14.7 349.30) scale(1.32)"><circle r="4.2" fill="#7fd3a6"/><path d="M0 0 L4.2 0 A4.2 4.2 0 0 0 1.8 -3.8 Z" fill="#282828"/><path d="M0 0 L-3 3 M0 0 L0 4.2 M0 0 L-4.2 0 M0 0 L-3 -3" stroke="#282828" stroke-width="0.4"/></g><g transform="translate(14.7 367.40) scale(1.32)"><circle r="4.1" fill="#d6b3ec"/><path d="M-4 0 Q0 1.5 4 0 M-3 -2.5 Q0 -1.2 3 -2.5 M-3 2.5 Q0 3.8 3 2.5 M0 -4 Q-1.5 0 0 4" fill="none" stroke="#8a6a9a" stroke-width="0.5"/></g><g transform="translate(14.7 385.50) scale(1.32)"><path d="M-3.5 -1.5 L-1.5 -3.5 H3.5 V1.5 L1.5 3.5 H-3.5 Z M-3.5 -1.5 H1.5 V3.5 M1.5 -1.5 L3.5 -3.5" fill="none" stroke="#e6e6e6" stroke-width="0.8"/><circle cx="-4" cy="-4" r="0.8" fill="#d6b3ec"/></g><g transform="translate(14.7 403.60) scale(1.32)"><path d="M-2 -4 L-4 -1 L-1 1 M-1 -1 L2 -3 L4 0 L1 3" fill="none" stroke="#e6e6e6" stroke-width="0.7"/><g fill="#d6b3ec"><circle cx="-2" cy="-4" r="0.9"/><circle cx="2" cy="-3" r="0.9"/><circle cx="0" cy="0" r="1"/><circle cx="-4" cy="-1" r="0.8"/><circle cx="4" cy="0" r="0.8"/></g></g><g transform="translate(14.7 421.70) scale(1.32)"><path d="M-4.5 0.5 L-1.5 -3 L4 0.5 L1 4 Z" fill="#d6b3ec" stroke="#eee" stroke-width="0.5"/><circle cx="4.2" cy="-3.8" r="0.8" fill="#d6b3ec"/></g><g transform="translate(14.7 439.80) scale(1.32)"><path d="M-3.5 -1.5 L-1.5 -3.5 H3.5 V1.5 L1.5 3.5 H-3.5 Z M-3.5 -1.5 H1.5 V3.5 M1.5 -1.5 L3.5 -3.5" fill="none" stroke="#e6e6e6" stroke-width="0.8"/><circle cx="-4.2" cy="1.2" r="0.8" fill="#eee"/></g><path d="M23.3 73.90 L23.3 72.30 L21.7 73.90 Z" fill="#a0a0a0"/><path d="M23.3 148.40 L23.3 146.80 L21.7 148.40 Z" fill="#a0a0a0"/><path d="M23.3 188.40 L23.3 186.80 L21.7 188.40 Z" fill="#a0a0a0"/><path d="M23.3 227.50 L23.3 225.90 L21.7 227.50 Z" fill="#a0a0a0"/><path d="M23.3 248.30 L23.3 246.70 L21.7 248.30 Z" fill="#a0a0a0"/><path d="M23.3 302.60 L23.3 301.00 L21.7 302.60 Z" fill="#a0a0a0"/><path d="M23.3 320.70 L23.3 319.10 L21.7 320.70 Z" fill="#a0a0a0"/><path d="M23.3 375.00 L23.3 373.40 L21.7 375.00 Z" fill="#a0a0a0"/><path d="M23.3 393.10 L23.3 391.50 L21.7 393.10 Z" fill="#a0a0a0"/><path d="M23.3 429.30 L23.3 427.70 L21.7 429.30 Z" fill="#a0a0a0"/><path d="M23.3 447.40 L23.3 445.80 L21.7 447.40 Z" fill="#a0a0a0"/><path d="M23.3 284.50 L23.3 282.90 L21.7 284.50 Z" fill="#a0a0a0"/></svg>
<div class="a" style="left:827.5px;top:26px;width:172.5px;height:159.2px;background:#292929;border-radius:4px 0 0 4px;overflow:hidden">
</div>
<div class="a" style="left:832px;top:27px;width:17px;height:10px;background:#2f2f2f;border-radius:2px;"></div>
<svg style="left:833.5px;top:27px;" width="11" height="9" viewBox="0 0 11 9"><path d="M1 1.5 H3.5 M2 1.5 V7.5 M2 4.5 H4 M2 7.5 H4" stroke="#ddd" stroke-width="0.8" fill="none"/><rect x="4.5" y="3.5" width="5" height="2" fill="#ddd"/><rect x="4.5" y="6.5" width="5" height="2" fill="#ddd"/><rect x="0" y="0" width="3.5" height="2.5" fill="#ddd"/></svg>
<svg style="left:842px;top:27.9px;" width="8" height="8" viewBox="0 0 8 8"><path d="M2.4 3.2 L4 4.8 L5.6 3.2" fill="none" stroke="#ccc" stroke-width="0.8" stroke-linecap="round" stroke-linejoin="round"/></svg>
<div class="a" style="left:851.5px;top:27px;width:17px;height:10px;background:#2a2a2a;border-radius:2px;"></div>
<svg style="left:852.6px;top:27.5px;" width="10" height="9" viewBox="0 0 10 9"><rect x="0.6" y="2.4" width="6" height="5.8" rx="1.2" fill="#9a9a9a"/><rect x="2.6" y="0.8" width="6.2" height="6" rx="1.2" fill="#d8d8d8"/><path d="M3.6 5.6 L5.6 3.2 L7.8 5.6 Z" fill="#555"/></svg>
<svg style="left:861px;top:27.9px;" width="8" height="8" viewBox="0 0 8 8"><path d="M2.4 3.2 L4 4.8 L5.6 3.2" fill="none" stroke="#ccc" stroke-width="0.8" stroke-linecap="round" stroke-linejoin="round"/></svg>
<div class="a" style="left:877.6px;top:27px;width:61.2px;height:9.3px;background:#1e1e1e;border-radius:2.5px;"></div>
<svg style="left:880px;top:27.5px;" width="9" height="9" viewBox="0 0 9 9"><circle cx="5" cy="3.7" r="2.5" fill="none" stroke="#ddd" stroke-width="0.9"/><path d="M3.2 5.5 L1 7.8" stroke="#ddd" stroke-width="1.1"/></svg>
<div class="t" style="left:890.50px;top:28.56px;font-size:6.60px;letter-spacing:-0.172px;color:#6e6e6e;">Search</div>
<div class="a" style="left:966px;top:27px;width:16px;height:10px;background:#2a2a2a;border-radius:2px;"></div>
<svg style="left:966.5px;top:27.5px;" width="10" height="9" viewBox="0 0 10 9"><path d="M0.8 1 H8 L5.2 4.5 V8 L3.6 7 V4.5 Z" fill="none" stroke="#ddd" stroke-width="0.9"/></svg>
<svg style="left:975px;top:27.9px;" width="8" height="8" viewBox="0 0 8 8"><path d="M2.4 3.2 L4 4.8 L5.6 3.2" fill="none" stroke="#ccc" stroke-width="0.8" stroke-linecap="round" stroke-linejoin="round"/></svg>
<div class="a" style="left:985.6px;top:27px;width:10px;height:10px;background:#4a4a4a;border-radius:2px;"></div>
<svg style="left:986px;top:27.5px;" width="9" height="9" viewBox="0 0 9 9"><rect x="1" y="2" width="6" height="6" rx="0.8" fill="none" stroke="#bbb" stroke-width="0.8"/><circle cx="6.8" cy="1.8" r="1.8" fill="#e6e6e6"/><path d="M2.5 5 H5.5" stroke="#bbb" stroke-width="0.7"/></svg>
<div class="a" style="left:827px;top:71.2px;width:173px;height:10.4px;background:#334d80;"></div>
<div class="a" style="left:842.8px;top:62.8px;width:0.8px;height:27px;background:#4a4a4a;"></div>
<svg style="left:838.5px;top:41px;" width="10" height="9" viewBox="0 0 10 9"><rect x="0.8" y="1" width="7.4" height="2" fill="#e0e0e0"/><rect x="1.3" y="3.6" width="6.4" height="4.8" fill="#e0e0e0"/><rect x="3.4" y="4.8" width="2.2" height="0.9" fill="#303030"/></svg>
<div class="t" style="left:850.60px;top:43.06px;font-size:6.60px;letter-spacing:-0.172px;color:#cfcfcf;">Scene Collection</div>
<svg style="left:840px;top:52.1px;" width="8" height="8" viewBox="0 0 8 8"><path d="M2.0 3.0 L4 5.0 L6.0 3.0" fill="none" stroke="#bbb" stroke-width="0.8" stroke-linecap="round" stroke-linejoin="round"/></svg>
<div class="a" style="left:848.6px;top:51px;width:10.4px;height:9.8px;background:#454545;border-radius:2px;"></div>
<svg style="left:849.5px;top:51.5px;" width="9" height="9" viewBox="0 0 9 9"><rect x="0.8" y="1" width="7.4" height="2" fill="#f0f0f0"/><rect x="1.3" y="3.6" width="6.4" height="4.8" fill="#f0f0f0"/><rect x="3.4" y="4.8" width="2.2" height="0.9" fill="#454545"/></svg>
<div class="t" style="left:861.00px;top:53.46px;font-size:6.60px;letter-spacing:-0.172px;color:#f4f4f4;font-weight:bold;-webkit-text-stroke:0.1px currentColor;">Collection</div>
<svg style="left:965.4px;top:51.8px;" width="7" height="8" viewBox="0 0 7 8"><rect x="0.3" y="0.8" width="6.4" height="6.4" rx="1" fill="#e6e6e6"/><path d="M1.6 4 L3 5.5 L5.6 2.2" fill="none" stroke="#222" stroke-width="1"/></svg>
<svg style="left:975.7px;top:52.9px;" width="8" height="6" viewBox="0 0 8 6"><path d="M0.4 3 Q3.6 -0.8 7.2 3 Q3.6 6.8 0.4 3 Z" fill="none" stroke="#e6e6e6" stroke-width="0.9"/><circle cx="3.8" cy="3" r="1.4" fill="#e6e6e6"/></svg>
<svg style="left:985.6px;top:51.9px;" width="9" height="8" viewBox="0 0 9 8"><rect x="0.6" y="1.6" width="7.6" height="5.6" rx="1" fill="#e6e6e6"/><rect x="2.6" y="0.6" width="3.4" height="1.6" fill="#e6e6e6"/><circle cx="4.4" cy="4.4" r="1.6" fill="#444"/></svg>
<svg style="left:975.7px;top:63.2px;" width="8" height="6" viewBox="0 0 8 6"><path d="M0.4 3 Q3.6 -0.8 7.2 3 Q3.6 6.8 0.4 3 Z" fill="none" stroke="#e6e6e6" stroke-width="0.9"/><circle cx="3.8" cy="3" r="1.4" fill="#e6e6e6"/></svg>
<svg style="left:985.6px;top:62.2px;" width="9" height="8" viewBox="0 0 9 8"><rect x="0.6" y="1.6" width="7.6" height="5.6" rx="1" fill="#e6e6e6"/><rect x="2.6" y="0.6" width="3.4" height="1.6" fill="#e6e6e6"/><circle cx="4.4" cy="4.4" r="1.6" fill="#444"/></svg>
<svg style="left:975.7px;top:73.4px;" width="8" height="6" viewBox="0 0 8 6"><path d="M0.4 3 Q3.6 -0.8 7.2 3 Q3.6 6.8 0.4 3 Z" fill="none" stroke="#e6e6e6" stroke-width="0.9"/><circle cx="3.8" cy="3" r="1.4" fill="#e6e6e6"/></svg>
<svg style="left:985.6px;top:72.4px;" width="9" height="8" viewBox="0 0 9 8"><rect x="0.6" y="1.6" width="7.6" height="5.6" rx="1" fill="#e6e6e6"/><rect x="2.6" y="0.6" width="3.4" height="1.6" fill="#e6e6e6"/><circle cx="4.4" cy="4.4" r="1.6" fill="#444"/></svg>
<svg style="left:975.7px;top:83.7px;" width="8" height="6" viewBox="0 0 8 6"><path d="M0.4 3 Q3.6 -0.8 7.2 3 Q3.6 6.8 0.4 3 Z" fill="none" stroke="#e6e6e6" stroke-width="0.9"/><circle cx="3.8" cy="3" r="1.4" fill="#e6e6e6"/></svg>
<svg style="left:985.6px;top:82.7px;" width="9" height="8" viewBox="0 0 9 8"><rect x="0.6" y="1.6" width="7.6" height="5.6" rx="1" fill="#e6e6e6"/><rect x="2.6" y="0.6" width="3.4" height="1.6" fill="#e6e6e6"/><circle cx="4.4" cy="4.4" r="1.6" fill="#444"/></svg>
<svg style="left:850.2px;top:62.2px;" width="8" height="8" viewBox="0 0 8 8"><path d="M3.0 2.0 L5.0 4 L3.0 6.0" fill="none" stroke="#bbb" stroke-width="0.8" stroke-linecap="round" stroke-linejoin="round"/></svg>
<svg style="left:850.2px;top:72.4px;" width="8" height="8" viewBox="0 0 8 8"><path d="M3.0 2.0 L5.0 4 L3.0 6.0" fill="none" stroke="#bbb" stroke-width="0.8" stroke-linecap="round" stroke-linejoin="round"/></svg>
<svg style="left:850.2px;top:82.7px;" width="8" height="8" viewBox="0 0 8 8"><path d="M3.0 2.0 L5.0 4 L3.0 6.0" fill="none" stroke="#bbb" stroke-width="0.8" stroke-linecap="round" stroke-linejoin="round"/></svg>
<svg style="left:859px;top:61.5px;" width="10" height="9" viewBox="0 0 10 9"><circle cx="3" cy="2.5" r="1.8" fill="#e88b3a"/><circle cx="6.6" cy="2.8" r="1.5" fill="#e88b3a"/><rect x="1" y="4.2" width="6" height="3.8" rx="0.6" fill="#e88b3a"/><path d="M7 6.1 L9.3 4.8 V7.6 Z" fill="#e88b3a"/></svg>
<div class="t" style="left:871.30px;top:63.76px;font-size:6.60px;letter-spacing:-0.172px;color:#d8d8d8;">Camera</div>
<div class="a" style="left:902.3px;top:61.2px;width:11px;height:10px;background:#454545;border-radius:2px;"></div>
<svg style="left:903px;top:62px;" width="10" height="9" viewBox="0 0 10 9"><circle cx="3.2" cy="2.8" r="1.9" fill="none" stroke="#3fb89a" stroke-width="0.9"/><circle cx="6.5" cy="5.5" r="1.9" fill="none" stroke="#3fb89a" stroke-width="0.9"/><path d="M1 4.8 H8.5" stroke="#3fb89a" stroke-width="0.9"/></svg>
<div class="a" style="left:858.5px;top:71.8px;width:10.6px;height:9.5px;background:#4d648f;border-radius:2px;"></div>
<svg style="left:859px;top:72px;" width="10" height="9" viewBox="0 0 10 9"><path d="M1 1 H8.6 L4.8 8 Z" fill="none" stroke="#f0a050" stroke-width="1.1" stroke-linejoin="round"/><path d="M2.6 2.2 H7" stroke="#f0a050" stroke-width="0.5"/></svg>
<div class="t" style="left:871.30px;top:73.96px;font-size:6.60px;letter-spacing:-0.172px;color:#f0a050;">Cube</div>
<div class="a" style="left:895.8px;top:71.8px;width:11.5px;height:9.6px;background:#2e5a73;border-radius:2px;"></div>
<svg style="left:896.5px;top:72px;" width="10" height="9" viewBox="0 0 10 9"><path d="M1 1 H8.6 L4.8 8 Z" fill="none" stroke="#3fc6a6" stroke-width="1.1" stroke-linejoin="round"/><path d="M4.8 8 V3 M1 1 L4.8 3 L8.6 1" stroke="#3fc6a6" stroke-width="0.7" fill="none"/></svg>
<svg style="left:829px;top:72.5px;" width="9" height="9" viewBox="0 0 9 9"><rect x="1" y="2" width="6" height="6" fill="none" stroke="#bcd" stroke-width="0.8" stroke-dasharray="1.2 0.8"/><rect x="5.6" y="0.2" width="2.6" height="2.6" fill="#fff"/></svg>
<svg style="left:859px;top:82px;" width="10" height="9" viewBox="0 0 10 9"><circle cx="4.5" cy="3.3" r="2.8" fill="#e88b3a"/><rect x="3" y="6" width="3" height="2.4" fill="#e88b3a"/></svg>
<div class="t" style="left:871.30px;top:84.36px;font-size:6.60px;letter-spacing:-0.172px;color:#d8d8d8;">Light</div>
<svg style="left:897.4px;top:82.5px;" width="9" height="9" viewBox="0 0 9 9"><circle cx="4.2" cy="4" r="3.2" fill="none" stroke="#3fb89a" stroke-width="0.9"/><path d="M4.2 2.2 V8.5" stroke="#3fb89a" stroke-width="0.8"/></svg>
<div class="a" style="left:827.5px;top:188px;width:172.5px;height:339px;background:#2c2c2c;border-radius:4px 0 0 4px;overflow:hidden">
<div class="a" style="left:0px;top:13px;width:14.5px;height:325px;background:#222222;"></div>
</div>
<div class="a" style="left:831.5px;top:189px;width:18px;height:10.5px;background:#303030;border-radius:2px;"></div>
<svg style="left:833.5px;top:190px;" width="11" height="9" viewBox="0 0 11 9"><rect x="0.6" y="0.8" width="7" height="3.2" rx="1.6" fill="#e6e6e6"/><rect x="0.6" y="5" width="7" height="3.2" rx="1.6" fill="#e6e6e6"/><circle cx="2.2" cy="2.4" r="1.1" fill="#303030"/><circle cx="6" cy="6.6" r="1.1" fill="#303030"/></svg>
<svg style="left:841.6px;top:190.5px;" width="8" height="8" viewBox="0 0 8 8"><path d="M2.4 3.2 L4 4.8 L5.6 3.2" fill="none" stroke="#ccc" stroke-width="0.8" stroke-linecap="round" stroke-linejoin="round"/></svg>
<div class="a" style="left:884px;top:190px;width:60px;height:8.6px;background:#1e1e1e;border-radius:2.5px;"></div>
<svg style="left:886px;top:189.8px;" width="9" height="9" viewBox="0 0 9 9"><circle cx="5" cy="3.7" r="2.5" fill="none" stroke="#ddd" stroke-width="0.9"/><path d="M3.2 5.5 L1 7.8" stroke="#ddd" stroke-width="1.1"/></svg>
<div class="t" style="left:896.50px;top:191.26px;font-size:6.60px;letter-spacing:-0.172px;color:#6e6e6e;">Search</div>
<div class="a" style="left:985.8px;top:189.5px;width:9.6px;height:9.6px;background:#262626;border-radius:2px;"></div>
<svg style="left:986.6px;top:190.5px;" width="8" height="8" viewBox="0 0 8 8"><path d="M2.2 3.1 L4 4.9 L5.8 3.1" fill="none" stroke="#ccc" stroke-width="0.8" stroke-linecap="round" stroke-linejoin="round"/></svg>
<div class="a" style="left:829px;top:408px;width:13px;height:14px;background:#2e2e2e;border-radius:2.5px;"></div>
<svg style="left:831px;top:207.1px;" width="9" height="9" viewBox="0 0 9 9"><path d="M2.3 0.6 V4.6" stroke="#ddd" stroke-width="0.9"/><rect x="1.1" y="4.4" width="2.4" height="4" rx="1.1" fill="#ddd"/><path d="M5.2 0.6 V2.6 Q6.5 4 7.8 2.6 V0.6" fill="none" stroke="#ddd" stroke-width="1"/><path d="M6.5 3.4 V8.4" stroke="#ddd" stroke-width="1.2"/></svg>
<svg style="left:831px;top:226.5px;" width="9" height="9" viewBox="0 0 9 9"><rect x="0.8" y="2.4" width="7.4" height="5.6" rx="0.8" fill="none" stroke="#ddd" stroke-width="0.9"/><path d="M1.5 0.8 L3 2.4 M7.5 0.8 L6 2.4 M0.8 5 H8.2" stroke="#ddd" stroke-width="0.7"/></svg>
<svg style="left:831px;top:241.7px;" width="9" height="9" viewBox="0 0 9 9"><rect x="1" y="0.8" width="7" height="3.5" fill="#ddd"/><rect x="0.5" y="4" width="8" height="2.5" fill="#ddd"/><rect x="2.5" y="6.5" width="4" height="2" fill="none" stroke="#ddd" stroke-width="0.7"/></svg>
<svg style="left:831px;top:256.0px;" width="9" height="9" viewBox="0 0 9 9"><rect x="2" y="0.8" width="6" height="5" rx="1" fill="#bbb"/><rect x="0.8" y="3" width="6" height="5" rx="1" fill="#ddd"/><rect x="2" y="4" width="3.5" height="3" fill="#999"/></svg>
<svg style="left:831px;top:270.7px;" width="9" height="9" viewBox="0 0 9 9"><path d="M1 6 L3 2 L5 5 L6.5 3.5 L8 6 Z" fill="#ddd"/><circle cx="6.4" cy="6.8" r="1.8" fill="#1f1f1f" stroke="#ddd" stroke-width="0.8"/></svg>
<svg style="left:831px;top:285.3px;" width="9" height="9" viewBox="0 0 9 9"><circle cx="4.5" cy="4.5" r="3.6" fill="#4a2a2e" stroke="#c0505a" stroke-width="0.9"/><path d="M1.3 3.2 Q3 2.4 4 3.6 Q4.6 5.8 7.2 6.4 M3.6 0.9 Q5.6 2.6 7.4 1.9 M1.2 6 Q2.4 6.2 3 7.8" fill="none" stroke="#d05a64" stroke-width="0.9"/></svg>
<svg style="left:831px;top:303.7px;" width="9" height="9" viewBox="0 0 9 9"><rect x="0.8" y="1" width="7.4" height="2" fill="#e0e0e0"/><rect x="1.3" y="3.6" width="6.4" height="4.8" fill="#e0e0e0"/><rect x="3.4" y="4.8" width="2.2" height="0.9" fill="#1f1f1f"/></svg>
<svg style="left:831px;top:322.8px;" width="9" height="9" viewBox="0 0 9 9"><rect x="1.6" y="1.6" width="5.8" height="5.8" rx="1" fill="#8a6a50" stroke="#e8873a" stroke-width="1.5"/><g fill="#e8873a"><circle cx="1.4" cy="1.4" r="1"/><circle cx="7.6" cy="1.4" r="1"/><circle cx="1.4" cy="7.6" r="1"/><circle cx="7.6" cy="7.6" r="1"/></g></svg>
<svg style="left:831px;top:337.9px;" width="9" height="9" viewBox="0 0 9 9"><path d="M1.2 7.8 L4.8 4.2" stroke="#5a8ee0" stroke-width="1.6"/><path d="M4 3.5 A2.6 2.6 0 0 1 7.8 0.8 L6 2.6 L6.6 3.2 L8.2 1.4 A2.6 2.6 0 0 1 5.4 5 Z" fill="#5a8ee0"/></svg>
<svg style="left:831px;top:352.2px;" width="9" height="9" viewBox="0 0 9 9"><path d="M1.5 1 L1.5 8 M1.5 1 L7.5 7.5 M1.5 1 L7.5 1" stroke="#5a8ee0" stroke-width="0.9"/><g fill="#5a8ee0"><circle cx="1.5" cy="1.2" r="1.1"/><circle cx="7.5" cy="7.5" r="1.1"/><circle cx="7.5" cy="1" r="1"/><circle cx="1.5" cy="8" r="1"/></g></svg>
<svg style="left:831px;top:366.8px;" width="9" height="9" viewBox="0 0 9 9"><circle cx="4.5" cy="4.5" r="3.6" fill="none" stroke="#5a8ee0" stroke-width="0.9"/><circle cx="4.8" cy="4.5" r="1.8" fill="#5a8ee0"/><path d="M0.5 4 Q1 0.5 4.5 0.6" fill="none" stroke="#1f1f1f" stroke-width="1.2"/></svg>
<svg style="left:831px;top:381.1px;" width="9" height="9" viewBox="0 0 9 9"><rect x="0.8" y="2.6" width="5" height="4" rx="2" transform="rotate(-35 4.5 4.5)" fill="none" stroke="#5a8ee0" stroke-width="1.1"/><rect x="3.4" y="2.4" width="5" height="4" rx="2" transform="rotate(-35 4.5 4.5)" fill="#5a8ee0"/></svg>
<svg style="left:831px;top:395.2px;" width="9" height="9" viewBox="0 0 9 9"><path d="M1.5 1.6 H7.5 L4.5 7.4 Z" fill="none" stroke="#3fb89a" stroke-width="1"/><g fill="#3fb89a"><circle cx="1.5" cy="1.6" r="1.3"/><circle cx="7.5" cy="1.6" r="1.3"/><circle cx="4.5" cy="7.4" r="1.3"/></g></svg>
<svg style="left:831px;top:410.3px;" width="9" height="9" viewBox="0 0 9 9"><circle cx="4.5" cy="4.5" r="3.6" fill="#e07080"/><path d="M4.5 0.9 A3.6 3.6 0 0 0 0.9 4.5 L4.5 4.5 Z M4.5 4.5 L8.1 4.5 A3.6 3.6 0 0 1 4.5 8.1 Z" fill="#3a1a20"/><circle cx="4.5" cy="4.5" r="3.6" fill="none" stroke="#f0a0a8" stroke-width="0.5"/></svg>
<svg style="left:848px;top:206.8px;" width="9" height="9" viewBox="0 0 9 9"><rect x="1.5" y="1.5" width="6" height="6" fill="#e6e6e6"/><rect x="0" y="0" width="9" height="9" fill="none" stroke="#e6e6e6" stroke-width="0.8" stroke-dasharray="2 5 2 0"/></svg>
<div class="t" style="left:860.00px;top:208.26px;font-size:6.60px;letter-spacing:-0.172px;color:#e6e6e6;">Cube</div>
<svg style="left:878.2px;top:207.3px;" width="8" height="8" viewBox="0 0 8 8"><path d="M3.1 2.2 L4.9 4 L3.1 5.8" fill="none" stroke="#ccc" stroke-width="0.8" stroke-linecap="round" stroke-linejoin="round"/></svg>
<svg style="left:889px;top:206.8px;" width="9" height="9" viewBox="0 0 9 9"><path d="M1 1 H8 L4.5 8 Z M1 1 L4.5 3.2 L8 1 M4.5 3.2 V8" fill="none" stroke="#e6e6e6" stroke-width="0.8" stroke-linejoin="round"/></svg>
<div class="t" style="left:901.00px;top:208.26px;font-size:6.60px;letter-spacing:-0.172px;color:#e6e6e6;">Cube</div>
<svg style="left:919.2px;top:207.3px;" width="8" height="8" viewBox="0 0 8 8"><path d="M3.1 2.2 L4.9 4 L3.1 5.8" fill="none" stroke="#ccc" stroke-width="0.8" stroke-linecap="round" stroke-linejoin="round"/></svg>
<svg style="left:930px;top:206.8px;" width="9" height="9" viewBox="0 0 9 9"><circle cx="4.5" cy="4.5" r="3.8" fill="#f0f0f0"/><path d="M4.5 0.7 A3.8 3.8 0 0 0 0.7 4.5 L4.5 4.5 Z M4.5 4.5 L8.3 4.5 A3.8 3.8 0 0 1 4.5 8.3 Z" fill="#222"/></svg>
<div class="t" style="left:942.00px;top:208.26px;font-size:6.60px;letter-spacing:-0.172px;color:#e6e6e6;">Material.001</div>
<svg style="left:986.5px;top:206.8px;" width="9" height="9" viewBox="0 0 9 9"><path d="M3 6 L1 8 M2.5 4.5 L4.5 6.5 L7.8 3.2 L5.8 1.2 Z" fill="none" stroke="#999" stroke-width="0.8"/></svg>
<div class="a" style="left:847px;top:225px;width:133px;height:60.5px;background:#232323;border-radius:3px;"></div>
<div class="a" style="left:849.3px;top:238px;width:129.1px;height:9.2px;background:#4772b3;border-radius:2.5px;"></div>
<svg style="left:853.5px;top:227.5px;" width="9" height="9" viewBox="0 0 9 9"><defs><radialGradient id="mg1" cx="0.35" cy="0.35" r="0.7"><stop offset="0" stop-color="#f8d8a0"/><stop offset="1" stop-color="#a07030"/></radialGradient></defs><circle cx="4" cy="4.5" r="3.5" fill="url(#mg1)"/></svg>
<div class="t" style="left:865.00px;top:229.16px;font-size:6.60px;letter-spacing:-0.172px;color:#e6e6e6;">Material</div>
<svg style="left:853.5px;top:238.2px;" width="9" height="9" viewBox="0 0 9 9"><defs><radialGradient id="mg2" cx="0.35" cy="0.35" r="0.7"><stop offset="0" stop-color="#e08050"/><stop offset="1" stop-color="#5a2010"/></radialGradient></defs><circle cx="4" cy="4.5" r="3.5" fill="url(#mg2)"/></svg>
<div class="t" style="left:865.00px;top:239.66px;font-size:6.60px;letter-spacing:-0.172px;color:#ffffff;">Material.001</div>
<svg style="left:851px;top:278px;" width="6" height="6" viewBox="0 0 6 6"><path d="M1.2 1 L4.8 3 L1.2 5 Z" fill="#ccc"/></svg>
<svg style="left:914.5px;top:279.3px;" width="9" height="5" viewBox="0 0 9 5"><path d="M0.5 0.5 H7.5 M0.5 2 H7.5 M0.5 3.5 H7.5" stroke="#888" stroke-width="0.6" stroke-dasharray="1 0.6"/></svg>
<div class="a" style="left:986px;top:225px;width:9.5px;height:19.8px;background:#454545;border-radius:2px;"></div>
<svg style="left:986.3px;top:225.5px;" width="9" height="9" viewBox="0 0 9 9"><path d="M4.5 1.8 V7.2 M1.8 4.5 H7.2" stroke="#ddd" stroke-width="1"/></svg>
<svg style="left:986.3px;top:234.8px;" width="9" height="9" viewBox="0 0 9 9"><path d="M1.8 4.5 H7.2" stroke="#ddd" stroke-width="1"/></svg>
<div class="a" style="left:986.3px;top:235px;width:9px;height:0.5px;background:#383838;"></div>
<div class="a" style="left:986px;top:249.5px;width:9.5px;height:8.5px;background:#262626;border-radius:2px;"></div>
<svg style="left:986.75px;top:249.8px;" width="8" height="8" viewBox="0 0 8 8"><path d="M2.2 3.1 L4 4.9 L5.8 3.1" fill="none" stroke="#ddd" stroke-width="0.9" stroke-linecap="round" stroke-linejoin="round"/></svg>
<div class="a" style="left:986px;top:262px;width:9.5px;height:20px;background:#454545;border-radius:2px;"></div>
<svg style="left:986.5px;top:262.5px;" width="9" height="9" viewBox="0 0 9 9"><path d="M1.8 6.5 L4.5 2.8 L7.2 6.5 Z" fill="#e6e6e6"/></svg>
<svg style="left:986.5px;top:272px;" width="9" height="9" viewBox="0 0 9 9"><path d="M1.8 2.5 L4.5 6.2 L7.2 2.5 Z" fill="#e6e6e6"/></svg>
<svg style="left:848.8px;top:290px;" width="15" height="9" viewBox="0 0 15 9"><circle cx="4.5" cy="4.5" r="3.6" fill="#f0f0f0"/><path d="M4.5 0.9 A3.6 3.6 0 0 0 0.9 4.5 L4.5 4.5 Z M4.5 4.5 L8.1 4.5 A3.6 3.6 0 0 1 4.5 8.1 Z" fill="#222"/></svg>
<svg style="left:855.6px;top:290.6px;" width="8" height="8" viewBox="0 0 8 8"><path d="M2.4 3.2 L4 4.8 L5.6 3.2" fill="none" stroke="#ccc" stroke-width="0.8" stroke-linecap="round" stroke-linejoin="round"/></svg>
<div class="a" style="left:863px;top:290px;width:112px;height:9.3px;background:#1e1e1e;border-radius:2.5px;"></div>
<div class="a" style="left:943px;top:290px;width:32px;height:9.3px;background:#454545;border-radius:0 2.5px 2.5px 0;"></div>
<div class="a" style="left:954px;top:290px;width:0.6px;height:9.3px;background:#303030;"></div>
<div class="a" style="left:965px;top:290px;width:0.6px;height:9.3px;background:#303030;"></div>
<svg style="left:945px;top:290.3px;" width="9" height="9" viewBox="0 0 9 9"><path d="M4.5 0.8 L8 2 V4.5 Q7.8 7.4 4.5 8.4 Q1.2 7.4 1 4.5 V2 Z" fill="none" stroke="#aaa" stroke-width="0.8"/></svg>
<svg style="left:955.5px;top:290.3px;" width="9" height="9" viewBox="0 0 9 9"><rect x="1.2" y="2.2" width="5" height="5.8" rx="0.8" fill="#aaa"/><path d="M3 1 H7.5 V6.5" fill="none" stroke="#ddd" stroke-width="0.8"/></svg>
<svg style="left:966px;top:290.3px;" width="9" height="9" viewBox="0 0 9 9"><path d="M2.2 2.2 L6.8 6.8 M6.8 2.2 L2.2 6.8" stroke="#ddd" stroke-width="0.9"/></svg>
<div class="t" style="left:866.40px;top:291.76px;font-size:6.60px;letter-spacing:-0.172px;color:#f0f0f0;">Material.001</div>
<div class="a" style="left:980px;top:290px;width:15px;height:9.3px;background:#262626;border-radius:2.5px;"></div>
<svg style="left:980.5px;top:290.2px;" width="9" height="9" viewBox="0 0 9 9"><path d="M1 1 H8 L4.5 8 Z" fill="none" stroke="#e6e6e6" stroke-width="0.8"/><circle cx="1.4" cy="1.2" r="1.1" fill="#e6e6e6"/><circle cx="7.6" cy="1.2" r="1.1" fill="#e6e6e6"/><circle cx="4.5" cy="7.6" r="1.1" fill="#e6e6e6"/></svg>
<svg style="left:987.5px;top:290.6px;" width="8" height="8" viewBox="0 0 8 8"><path d="M2.4 3.2 L4 4.8 L5.6 3.2" fill="none" stroke="#ccc" stroke-width="0.8" stroke-linecap="round" stroke-linejoin="round"/></svg>
<div class="a" style="left:847px;top:303px;width:148px;height:9.5px;background:#4a4a4a;border-radius:2.5px;"></div>
<div class="a" style="left:895px;top:303px;width:0.6px;height:9.5px;background:#383838;"></div>
<div class="a" style="left:945.3px;top:303px;width:0.6px;height:9.5px;background:#383838;"></div>
<div class="t" style="left:721.00px;width:300px;text-align:center;top:304.76px;font-size:6.60px;letter-spacing:-0.172px;color:#e6e6e6;">Assign</div>
<div class="t" style="left:770.20px;width:300px;text-align:center;top:304.76px;font-size:6.60px;letter-spacing:-0.172px;color:#e6e6e6;">Select</div>
<div class="t" style="left:820.30px;width:300px;text-align:center;top:304.76px;font-size:6.60px;letter-spacing:-0.172px;color:#e6e6e6;">Deselect</div>
<div class="a" style="left:847px;top:318px;width:148.5px;height:12.5px;background:#3d3d3d;border-radius:3px;"></div>
<svg style="left:849.2px;top:320.3px;" width="8" height="8" viewBox="0 0 8 8"><path d="M3.0 2.0 L5.0 4 L3.0 6.0" fill="none" stroke="#ccc" stroke-width="0.8" stroke-linecap="round" stroke-linejoin="round"/></svg>
<div class="t" style="left:857.80px;top:321.96px;font-size:6.60px;letter-spacing:-0.172px;color:#e6e6e6;">Preview</div>
<svg style="left:984px;top:322.8px;" width="8" height="4" viewBox="0 0 8 4"><g fill="#6a6a6a"><rect x="0.0" y="0" width="1" height="1"/><rect x="0.0" y="2" width="1" height="1"/><rect x="1.7" y="0" width="1" height="1"/><rect x="1.7" y="2" width="1" height="1"/><rect x="3.4" y="0" width="1" height="1"/><rect x="3.4" y="2" width="1" height="1"/><rect x="5.1" y="0" width="1" height="1"/><rect x="5.1" y="2" width="1" height="1"/></g></svg>
<div class="a" style="left:847px;top:332.5px;width:148.5px;height:200px;background:#3d3d3d;border-radius:3px 3px 0 0;"></div>
<svg style="left:849.2px;top:334.6px;" width="8" height="8" viewBox="0 0 8 8"><path d="M2.0 3.0 L4 5.0 L6.0 3.0" fill="none" stroke="#ccc" stroke-width="0.8" stroke-linecap="round" stroke-linejoin="round"/></svg>
<div class="t" style="left:857.80px;top:335.56px;font-size:6.60px;letter-spacing:-0.172px;color:#e6e6e6;">Surface</div>
<svg style="left:984px;top:337px;" width="8" height="4" viewBox="0 0 8 4"><g fill="#6a6a6a"><rect x="0.0" y="0" width="1" height="1"/><rect x="0.0" y="2" width="1" height="1"/><rect x="1.7" y="0" width="1" height="1"/><rect x="1.7" y="2" width="1" height="1"/><rect x="3.4" y="0" width="1" height="1"/><rect x="3.4" y="2" width="1" height="1"/><rect x="5.1" y="0" width="1" height="1"/><rect x="5.1" y="2" width="1" height="1"/></g></svg>
<div class="t" style="left:600.60px;width:300px;text-align:right;top:351.76px;font-size:6.60px;letter-spacing:-0.172px;color:#d8d8d8;">Surface</div>
<div class="a" style="left:906px;top:350px;width:74.5px;height:8.6px;background:#262626;border-radius:2.5px;"></div>
<svg style="left:906.5px;top:350px;" width="8" height="8.6" viewBox="0 0 8 8.6"><circle cx="4" cy="4.3" r="1.7" fill="#5ccc5c"/></svg>
<div class="t" style="left:916.70px;top:351.76px;font-size:6.60px;letter-spacing:-0.172px;color:#f0f0f0;">Principled BSDF</div>
<div class="t" style="left:600.60px;width:300px;text-align:right;top:370.96px;font-size:6.60px;letter-spacing:-0.172px;color:#d8d8d8;">Base Color</div>
<div class="a" style="left:906px;top:369.1px;width:9.5px;height:9px;background:#262626;border-radius:2.5px 0 0 2.5px;"></div>
<svg style="left:906.5px;top:369.1px;" width="8" height="9" viewBox="0 0 8 9"><circle cx="4.2" cy="4.5" r="2.0" fill="#e0d020"/></svg>
<svg style="left:984px;top:370.6px;" width="6" height="6" viewBox="0 0 6 6"><circle cx="2.5" cy="3" r="1.1" fill="#e6e6e6"/></svg>
<div class="a" style="left:915.4px;top:368.5px;width:65.1px;height:9px;background:#8b3f1c;border-radius:0 2.5px 2.5px 0;"></div>
<div class="t" style="left:600.60px;width:300px;text-align:right;top:384.06px;font-size:6.60px;letter-spacing:-0.172px;color:#d8d8d8;">Metallic</div>
<div class="a" style="left:906px;top:382.2px;width:9.5px;height:9px;background:#262626;border-radius:2.5px 0 0 2.5px;"></div>
<svg style="left:906.5px;top:382.2px;" width="8" height="9" viewBox="0 0 8 9"><circle cx="4.2" cy="4.5" r="2.0" fill="#c4c4c4"/></svg>
<svg style="left:984px;top:383.7px;" width="6" height="6" viewBox="0 0 6 6"><circle cx="2.5" cy="3" r="1.1" fill="#e6e6e6"/></svg>
<div class="a" style="left:915.4px;top:382.2px;width:65.1px;height:9px;background:#545454;border-radius:0 2.5px 2.5px 0;"></div>
<div class="t" style="left:798.00px;width:300px;text-align:center;top:384.06px;font-size:6.60px;letter-spacing:-0.172px;color:#e6e6e6;">0.000</div>
<div class="t" style="left:600.60px;width:300px;text-align:right;top:396.76px;font-size:6.60px;letter-spacing:-0.172px;color:#d8d8d8;">Roughness</div>
<div class="a" style="left:906px;top:394.9px;width:9.5px;height:9px;background:#262626;border-radius:2.5px 0 0 2.5px;"></div>
<svg style="left:906.5px;top:394.9px;" width="8" height="9" viewBox="0 0 8 9"><circle cx="4.2" cy="4.5" r="2.0" fill="#c4c4c4"/></svg>
<svg style="left:984px;top:396.4px;" width="6" height="6" viewBox="0 0 6 6"><circle cx="2.5" cy="3" r="1.1" fill="#e6e6e6"/></svg>
<div class="a" style="left:915.4px;top:394.9px;width:65.1px;height:9px;background:#545454;border-radius:0 2.5px 2.5px 0;"></div>
<div class="a" style="left:915.4px;top:394.9px;width:32.55px;height:9px;background:#4772b3;border-radius:0;"></div>
<div class="t" style="left:798.00px;width:300px;text-align:center;top:396.76px;font-size:6.60px;letter-spacing:-0.172px;color:#e6e6e6;">0.500</div>
<div class="t" style="left:600.60px;width:300px;text-align:right;top:409.76px;font-size:6.60px;letter-spacing:-0.172px;color:#d8d8d8;">IOR</div>
<div class="a" style="left:906px;top:407.9px;width:9.5px;height:9px;background:#262626;border-radius:2.5px 0 0 2.5px;"></div>
<svg style="left:906.5px;top:407.9px;" width="8" height="9" viewBox="0 0 8 9"><circle cx="4.2" cy="4.5" r="2.0" fill="#c4c4c4"/></svg>
<svg style="left:984px;top:409.4px;" width="6" height="6" viewBox="0 0 6 6"><circle cx="2.5" cy="3" r="1.1" fill="#e6e6e6"/></svg>
<div class="a" style="left:915.4px;top:407.9px;width:65.1px;height:9px;background:#545454;border-radius:0 2.5px 2.5px 0;"></div>
<div class="t" style="left:798.00px;width:300px;text-align:center;top:409.76px;font-size:6.60px;letter-spacing:-0.172px;color:#e6e6e6;">1.500</div>
<div class="t" style="left:600.60px;width:300px;text-align:right;top:422.76px;font-size:6.60px;letter-spacing:-0.172px;color:#d8d8d8;">Alpha</div>
<div class="a" style="left:906px;top:420.9px;width:9.5px;height:9px;background:#262626;border-radius:2.5px 0 0 2.5px;"></div>
<svg style="left:906.5px;top:420.9px;" width="8" height="9" viewBox="0 0 8 9"><circle cx="4.2" cy="4.5" r="2.0" fill="#c4c4c4"/></svg>
<svg style="left:984px;top:422.4px;" width="6" height="6" viewBox="0 0 6 6"><circle cx="2.5" cy="3" r="1.1" fill="#e6e6e6"/></svg>
<div class="a" style="left:915.4px;top:420.9px;width:65.1px;height:9px;background:#545454;border-radius:0 2.5px 2.5px 0;"></div>
<div class="a" style="left:915.4px;top:420.9px;width:65.1px;height:9px;background:#4772b3;border-radius:0 2.5px 2.5px 0;"></div>
<div class="t" style="left:798.00px;width:300px;text-align:center;top:422.76px;font-size:6.60px;letter-spacing:-0.172px;color:#e6e6e6;">1.000</div>
<div class="t" style="left:600.60px;width:300px;text-align:right;top:435.86px;font-size:6.60px;letter-spacing:-0.172px;color:#d8d8d8;">Normal</div>
<div class="a" style="left:906px;top:434px;width:74.5px;height:9px;background:#262626;border-radius:2.5px;"></div>
<svg style="left:906.5px;top:434px;" width="8" height="9" viewBox="0 0 8 9"><circle cx="4" cy="4.5" r="1.6" fill="#6a6ae0"/></svg>
<div class="t" style="left:916.70px;top:435.86px;font-size:6.60px;letter-spacing:-0.172px;color:#f0f0f0;">Default</div>
<svg style="left:852px;top:447.8px;" width="8" height="8" viewBox="0 0 8 8"><path d="M2.95 1.9 L5.05 4 L2.95 6.1" fill="none" stroke="#d0d0d0" stroke-width="0.95" stroke-linecap="round" stroke-linejoin="round"/></svg>
<div class="t" style="left:861.30px;top:448.96px;font-size:6.60px;letter-spacing:-0.172px;color:#e0e0e0;">Diffuse</div>
<svg style="left:852px;top:460.3px;" width="8" height="8" viewBox="0 0 8 8"><path d="M2.95 1.9 L5.05 4 L2.95 6.1" fill="none" stroke="#d0d0d0" stroke-width="0.95" stroke-linecap="round" stroke-linejoin="round"/></svg>
<div class="t" style="left:861.30px;top:461.46px;font-size:6.60px;letter-spacing:-0.172px;color:#e0e0e0;">Subsurface</div>
<svg style="left:852px;top:472.8px;" width="8" height="8" viewBox="0 0 8 8"><path d="M2.95 1.9 L5.05 4 L2.95 6.1" fill="none" stroke="#d0d0d0" stroke-width="0.95" stroke-linecap="round" stroke-linejoin="round"/></svg>
<div class="t" style="left:861.30px;top:473.96px;font-size:6.60px;letter-spacing:-0.172px;color:#e0e0e0;">Specular</div>
<svg style="left:852px;top:485.3px;" width="8" height="8" viewBox="0 0 8 8"><path d="M2.95 1.9 L5.05 4 L2.95 6.1" fill="none" stroke="#d0d0d0" stroke-width="0.95" stroke-linecap="round" stroke-linejoin="round"/></svg>
<div class="t" style="left:861.30px;top:486.46px;font-size:6.60px;letter-spacing:-0.172px;color:#e0e0e0;">Transmission</div>
<svg style="left:852px;top:497.8px;" width="8" height="8" viewBox="0 0 8 8"><path d="M2.95 1.9 L5.05 4 L2.95 6.1" fill="none" stroke="#d0d0d0" stroke-width="0.95" stroke-linecap="round" stroke-linejoin="round"/></svg>
<div class="t" style="left:861.30px;top:498.96px;font-size:6.60px;letter-spacing:-0.172px;color:#e0e0e0;">Coat</div>
<svg style="left:852px;top:510.29999999999995px;" width="8" height="8" viewBox="0 0 8 8"><path d="M2.95 1.9 L5.05 4 L2.95 6.1" fill="none" stroke="#d0d0d0" stroke-width="0.95" stroke-linecap="round" stroke-linejoin="round"/></svg>
<div class="t" style="left:861.30px;top:511.46px;font-size:6.60px;letter-spacing:-0.172px;color:#e0e0e0;">Sheen</div>
<svg style="left:852px;top:522.5999999999999px;" width="8" height="8" viewBox="0 0 8 8"><path d="M2.95 1.9 L5.05 4 L2.95 6.1" fill="none" stroke="#d0d0d0" stroke-width="0.95" stroke-linecap="round" stroke-linejoin="round"/></svg>
<div class="t" style="left:861.30px;top:523.76px;font-size:6.60px;letter-spacing:-0.172px;color:#e0e0e0;">Emission</div>
<div class="a" style="left:827px;top:527px;width:173px;height:12px;background:#181818;"></div>
<svg style="left:810px;top:390px;" width="60" height="55" viewBox="0 0 60 55"><ellipse cx="26.4" cy="27.2" rx="18.2" ry="16.5" fill="none" stroke="#ff0000" stroke-width="2.8"/></svg>
<div class="a" style="left:1px;top:489px;width:825px;height:38px;background:#2c2c2c;border-radius:4px;overflow:hidden">
<div class="a" style="left:0px;top:0px;width:825px;height:13px;background:#303030;"></div>
<div class="a" style="left:0px;top:0px;width:825px;height:0.8px;background:#383838;"></div>
<div class="a" style="left:0px;top:13px;width:825px;height:11.5px;background:#1d1d1d;"></div>
<div class="a" style="left:0px;top:24.5px;width:825px;height:13.5px;background:#2c2c2c;"></div>
<svg style="left:0;top:0" width="825" height="37" viewBox="0 0 825 37"><rect x="0" y="24.5" width="29.9" height="12.5" fill="#232323"/><rect x="793.5" y="24.5" width="40" height="12.5" fill="#232323"/><rect x="26.80" y="24.5" width="0.8" height="11" fill="#232323"/><rect x="42.14" y="24.5" width="0.8" height="11" fill="#232323"/><rect x="57.47" y="24.5" width="0.8" height="11" fill="#232323"/><rect x="72.81" y="24.5" width="0.8" height="11" fill="#232323"/><rect x="88.14" y="24.5" width="0.8" height="11" fill="#232323"/><rect x="103.48" y="24.5" width="0.8" height="11" fill="#232323"/><rect x="118.81" y="24.5" width="0.8" height="11" fill="#232323"/><rect x="134.15" y="24.5" width="0.8" height="11" fill="#232323"/><rect x="149.48" y="24.5" width="0.8" height="11" fill="#232323"/><rect x="164.82" y="24.5" width="0.8" height="11" fill="#232323"/><rect x="180.15" y="24.5" width="0.8" height="11" fill="#232323"/><rect x="195.49" y="24.5" width="0.8" height="11" fill="#232323"/><rect x="210.82" y="24.5" width="0.8" height="11" fill="#232323"/><rect x="226.16" y="24.5" width="0.8" height="11" fill="#232323"/><rect x="241.49" y="24.5" width="0.8" height="11" fill="#232323"/><rect x="256.82" y="24.5" width="0.8" height="11" fill="#232323"/><rect x="272.16" y="24.5" width="0.8" height="11" fill="#232323"/><rect x="287.50" y="24.5" width="0.8" height="11" fill="#232323"/><rect x="302.83" y="24.5" width="0.8" height="11" fill="#232323"/><rect x="318.17" y="24.5" width="0.8" height="11" fill="#232323"/><rect x="333.50" y="24.5" width="0.8" height="11" fill="#232323"/><rect x="348.84" y="24.5" width="0.8" height="11" fill="#232323"/><rect x="364.17" y="24.5" width="0.8" height="11" fill="#232323"/><rect x="379.51" y="24.5" width="0.8" height="11" fill="#232323"/><rect x="394.84" y="24.5" width="0.8" height="11" fill="#232323"/><rect x="410.18" y="24.5" width="0.8" height="11" fill="#232323"/><rect x="425.51" y="24.5" width="0.8" height="11" fill="#232323"/><rect x="440.85" y="24.5" width="0.8" height="11" fill="#232323"/><rect x="456.18" y="24.5" width="0.8" height="11" fill="#232323"/><rect x="471.52" y="24.5" width="0.8" height="11" fill="#232323"/><rect x="486.85" y="24.5" width="0.8" height="11" fill="#232323"/><rect x="502.19" y="24.5" width="0.8" height="11" fill="#232323"/><rect x="517.52" y="24.5" width="0.8" height="11" fill="#232323"/><rect x="532.86" y="24.5" width="0.8" height="11" fill="#232323"/><rect x="548.19" y="24.5" width="0.8" height="11" fill="#232323"/><rect x="563.52" y="24.5" width="0.8" height="11" fill="#232323"/><rect x="578.86" y="24.5" width="0.8" height="11" fill="#232323"/><rect x="594.19" y="24.5" width="0.8" height="11" fill="#232323"/><rect x="609.53" y="24.5" width="0.8" height="11" fill="#232323"/><rect x="624.87" y="24.5" width="0.8" height="11" fill="#232323"/><rect x="640.20" y="24.5" width="0.8" height="11" fill="#232323"/><rect x="655.53" y="24.5" width="0.8" height="11" fill="#232323"/><rect x="670.87" y="24.5" width="0.8" height="11" fill="#232323"/><rect x="686.21" y="24.5" width="0.8" height="11" fill="#232323"/><rect x="701.54" y="24.5" width="0.8" height="11" fill="#232323"/><rect x="716.88" y="24.5" width="0.8" height="11" fill="#232323"/><rect x="732.21" y="24.5" width="0.8" height="11" fill="#232323"/><rect x="747.54" y="24.5" width="0.8" height="11" fill="#232323"/><rect x="762.88" y="24.5" width="0.8" height="11" fill="#232323"/><rect x="778.22" y="24.5" width="0.8" height="11" fill="#232323"/><rect x="793.55" y="24.5" width="0.8" height="11" fill="#232323"/><rect x="808.88" y="24.5" width="0.8" height="11" fill="#232323"/><rect x="29.9" y="35.2" width="763.6" height="1" fill="#3a3a3a"/></svg>
</div>
<div class="a" style="left:5px;top:490.8px;width:16px;height:10px;background:#2a2a2a;border-radius:2.5px;"></div>
<svg style="left:6px;top:491px;" width="10" height="10" viewBox="0 0 10 10"><circle cx="4.5" cy="4.5" r="3.8" fill="#eee"/><path d="M4.5 1.8 V4.5 L2.8 6" fill="none" stroke="#303030" stroke-width="0.9"/></svg>
<svg style="left:13.8px;top:492.1px;" width="8" height="8" viewBox="0 0 8 8"><path d="M2.4 3.2 L4 4.8 L5.6 3.2" fill="none" stroke="#ccc" stroke-width="0.8" stroke-linecap="round" stroke-linejoin="round"/></svg>
<div class="a" style="left:25.5px;top:490.8px;width:36px;height:10px;background:#2a2a2a;border-radius:2.5px;"></div>
<div class="t" style="left:27.60px;top:492.76px;font-size:6.60px;letter-spacing:-0.172px;color:#e0e0e0;">Playback</div>
<svg style="left:53.5px;top:492.1px;" width="8" height="8" viewBox="0 0 8 8"><path d="M2.4 3.2 L4 4.8 L5.6 3.2" fill="none" stroke="#ccc" stroke-width="0.8" stroke-linecap="round" stroke-linejoin="round"/></svg>
<div class="a" style="left:62px;top:490.8px;width:31px;height:10px;background:#2a2a2a;border-radius:2.5px;"></div>
<div class="t" style="left:64.50px;top:492.76px;font-size:6.60px;letter-spacing:-0.172px;color:#e0e0e0;">Keying</div>
<svg style="left:84.5px;top:492.1px;" width="8" height="8" viewBox="0 0 8 8"><path d="M2.4 3.2 L4 4.8 L5.6 3.2" fill="none" stroke="#ccc" stroke-width="0.8" stroke-linecap="round" stroke-linejoin="round"/></svg>
<div class="t" style="left:97.50px;top:492.76px;font-size:6.60px;letter-spacing:-0.172px;color:#e0e0e0;">View</div>
<div class="t" style="left:118.50px;top:492.76px;font-size:6.60px;letter-spacing:-0.172px;color:#e0e0e0;">Marker</div>
<div class="a" style="left:364.5px;top:491.2px;width:9.8px;height:9.3px;background:#4a4a4a;border-radius:2px 0 0 2px;"></div>
<div class="a" style="left:374.3px;top:491.2px;width:9.8px;height:9.3px;background:#2a2a2a;border-radius:0 2px 2px 0;"></div>
<svg style="left:364.9px;top:491.3px;" width="9" height="9" viewBox="0 0 9 9"><circle cx="4.5" cy="4.5" r="2.5" fill="none" stroke="#aaa" stroke-width="0.9"/></svg>
<svg style="left:375.2px;top:492.1px;" width="8" height="8" viewBox="0 0 8 8"><path d="M2.5 3.25 L4 4.75 L5.5 3.25" fill="none" stroke="#666" stroke-width="0.8" stroke-linecap="round" stroke-linejoin="round"/></svg>
<div class="a" style="left:388px;top:491.2px;width:61.5px;height:9.3px;background:#3c3c3c;border-radius:2px;"></div>
<div class="a" style="left:397.95px;top:491.2px;width:0.6px;height:9.3px;background:#333333;"></div>
<div class="a" style="left:408.2px;top:491.2px;width:0.6px;height:9.3px;background:#333333;"></div>
<div class="a" style="left:418.45px;top:491.2px;width:0.6px;height:9.3px;background:#333333;"></div>
<div class="a" style="left:428.7px;top:491.2px;width:0.6px;height:9.3px;background:#333333;"></div>
<div class="a" style="left:438.95px;top:491.2px;width:0.6px;height:9.3px;background:#333333;"></div>
<svg style="left:0px;top:0px;" width="1000" height="538" viewBox="0 0 1000 538"><g transform="translate(393.1 495.85)" fill="#e6e6e6"><rect x="-3.3" y="-2.8" width="1.1" height="5.6"/><path d="M3 -2.8 L-2 0 L3 2.8 Z"/></g><g transform="translate(403.4 495.85)" fill="#e6e6e6"><path d="M-1.6 -2.6 L1 0 L-1.6 2.6 L-4.2 0 Z"/><path d="M4.2 -2.4 L1 0 L4.2 2.4 Z"/></g><g transform="translate(413.6 495.85)" fill="#e6e6e6"><path d="M3 -3.2 L-2.6 0 L3 3.2 Z"/></g><g transform="translate(423.9 495.85)" fill="#e6e6e6"><path d="M-2.6 -3.2 L3 0 L-2.6 3.2 Z"/></g><g transform="translate(434.1 495.85)" fill="#e6e6e6"><path d="M-4.2 -2.4 L-1 0 L-4.2 2.4 Z"/><path d="M1.6 -2.6 L4.2 0 L1.6 2.6 L-1 0 Z"/></g><g transform="translate(444.4 495.85)" fill="#e6e6e6"><path d="M-3 -2.8 L2 0 L-3 2.8 Z"/><rect x="2.2" y="-2.8" width="1.1" height="5.6"/></g></svg>
<div class="a" style="left:678.8px;top:491.2px;width:38px;height:9.3px;background:#545454;border-radius:2.5px;"></div>
<div class="t" style="left:547.50px;width:300px;text-align:center;top:492.76px;font-size:6.60px;letter-spacing:-0.172px;color:#e6e6e6;">1</div>
<div class="a" style="left:720.5px;top:491.2px;width:9.5px;height:9.3px;background:#3c3c3c;border-radius:2.5px 0 0 2.5px;"></div>
<svg style="left:720.7px;top:491.2px;" width="9" height="9" viewBox="0 0 9 9"><circle cx="4.5" cy="5" r="2.9" fill="none" stroke="#ddd" stroke-width="0.9"/><path d="M4.5 3.3 V5 L5.6 6" stroke="#ddd" stroke-width="0.7" fill="none"/><path d="M3.5 1 H5.5" stroke="#ddd" stroke-width="0.8"/></svg>
<div class="a" style="left:730px;top:491.2px;width:47px;height:9.3px;background:#545454;"></div>
<div class="a" style="left:777px;top:491.2px;width:43.8px;height:9.3px;background:#545454;border-radius:0 2.5px 2.5px 0;"></div>
<div class="a" style="left:776.6px;top:491.2px;width:0.6px;height:9.3px;background:#3a3a3a;"></div>
<div class="t" style="left:737.50px;top:492.76px;font-size:6.60px;letter-spacing:-0.172px;color:#e6e6e6;">Start</div>
<div class="t" style="left:617.00px;width:300px;text-align:center;top:492.76px;font-size:6.60px;letter-spacing:-0.172px;color:#e6e6e6;">1</div>
<div class="t" style="left:783.80px;top:492.76px;font-size:6.60px;letter-spacing:-0.172px;color:#e6e6e6;">End</div>
<div class="t" style="left:658.30px;width:300px;text-align:center;top:492.76px;font-size:6.60px;letter-spacing:-0.172px;color:#e6e6e6;">250</div>
<div class="t" style="left:-91.53px;width:300px;text-align:center;top:505.76px;font-size:6.60px;letter-spacing:-0.172px;color:#b8b8b8;">10</div>
<div class="t" style="left:-60.86px;width:300px;text-align:center;top:505.76px;font-size:6.60px;letter-spacing:-0.172px;color:#b8b8b8;">20</div>
<div class="t" style="left:-30.19px;width:300px;text-align:center;top:505.76px;font-size:6.60px;letter-spacing:-0.172px;color:#b8b8b8;">30</div>
<div class="t" style="left:0.48px;width:300px;text-align:center;top:505.76px;font-size:6.60px;letter-spacing:-0.172px;color:#b8b8b8;">40</div>
<div class="t" style="left:31.15px;width:300px;text-align:center;top:505.76px;font-size:6.60px;letter-spacing:-0.172px;color:#b8b8b8;">50</div>
<div class="t" style="left:61.82px;width:300px;text-align:center;top:505.76px;font-size:6.60px;letter-spacing:-0.172px;color:#b8b8b8;">60</div>
<div class="t" style="left:92.49px;width:300px;text-align:center;top:505.76px;font-size:6.60px;letter-spacing:-0.172px;color:#b8b8b8;">70</div>
<div class="t" style="left:123.16px;width:300px;text-align:center;top:505.76px;font-size:6.60px;letter-spacing:-0.172px;color:#b8b8b8;">80</div>
<div class="t" style="left:153.83px;width:300px;text-align:center;top:505.76px;font-size:6.60px;letter-spacing:-0.172px;color:#b8b8b8;">90</div>
<div class="t" style="left:184.50px;width:300px;text-align:center;top:505.76px;font-size:6.60px;letter-spacing:-0.172px;color:#b8b8b8;">100</div>
<div class="t" style="left:215.17px;width:300px;text-align:center;top:505.76px;font-size:6.60px;letter-spacing:-0.172px;color:#b8b8b8;">110</div>
<div class="t" style="left:245.84px;width:300px;text-align:center;top:505.76px;font-size:6.60px;letter-spacing:-0.172px;color:#b8b8b8;">120</div>
<div class="t" style="left:276.51px;width:300px;text-align:center;top:505.76px;font-size:6.60px;letter-spacing:-0.172px;color:#b8b8b8;">130</div>
<div class="t" style="left:307.18px;width:300px;text-align:center;top:505.76px;font-size:6.60px;letter-spacing:-0.172px;color:#b8b8b8;">140</div>
<div class="t" style="left:337.85px;width:300px;text-align:center;top:505.76px;font-size:6.60px;letter-spacing:-0.172px;color:#b8b8b8;">150</div>
<div class="t" style="left:368.52px;width:300px;text-align:center;top:505.76px;font-size:6.60px;letter-spacing:-0.172px;color:#b8b8b8;">160</div>
<div class="t" style="left:399.19px;width:300px;text-align:center;top:505.76px;font-size:6.60px;letter-spacing:-0.172px;color:#b8b8b8;">170</div>
<div class="t" style="left:429.86px;width:300px;text-align:center;top:505.76px;font-size:6.60px;letter-spacing:-0.172px;color:#b8b8b8;">180</div>
<div class="t" style="left:460.53px;width:300px;text-align:center;top:505.76px;font-size:6.60px;letter-spacing:-0.172px;color:#b8b8b8;">190</div>
<div class="t" style="left:491.20px;width:300px;text-align:center;top:505.76px;font-size:6.60px;letter-spacing:-0.172px;color:#b8b8b8;">200</div>
<div class="t" style="left:521.87px;width:300px;text-align:center;top:505.76px;font-size:6.60px;letter-spacing:-0.172px;color:#b8b8b8;">210</div>
<div class="t" style="left:552.54px;width:300px;text-align:center;top:505.76px;font-size:6.60px;letter-spacing:-0.172px;color:#b8b8b8;">220</div>
<div class="t" style="left:583.21px;width:300px;text-align:center;top:505.76px;font-size:6.60px;letter-spacing:-0.172px;color:#b8b8b8;">230</div>
<div class="t" style="left:613.88px;width:300px;text-align:center;top:505.76px;font-size:6.60px;letter-spacing:-0.172px;color:#b8b8b8;">240</div>
<div class="t" style="left:644.55px;width:300px;text-align:center;top:505.76px;font-size:6.60px;letter-spacing:-0.172px;color:#b8b8b8;">250</div>
<div class="a" style="left:24px;top:504px;width:13px;height:9.2px;background:#4772b3;border-radius:2.5px;"></div>
<div class="t" style="left:-119.50px;width:300px;text-align:center;top:505.76px;font-size:6.60px;letter-spacing:-0.172px;color:#ffffff;">1</div>
<div class="a" style="left:30.1px;top:512.5px;width:1.1px;height:14.5px;background:#4772b3;"></div>
<svg style="left:1.5px;top:514px;" width="5" height="8" viewBox="0 0 5 8"><path d="M1.5 2.5 L3.5 4.2 L1.5 6" fill="none" stroke="#888" stroke-width="0.7"/></svg>
<svg style="left:818px;top:514px;" width="6" height="8" viewBox="0 0 6 8"><path d="M4 2.5 L2 4.2 L4 6" fill="none" stroke="#888" stroke-width="0.7"/></svg>
<svg style="left:4.8px;top:527.5px;" width="7" height="10" viewBox="0 0 7 10"><rect x="0.6" y="0.6" width="5.6" height="8.4" rx="2" fill="none" stroke="#bbb" stroke-width="0.8"/><rect x="1" y="1" width="2.5" height="3.6" rx="0.8" fill="#ddd"/></svg>
<div class="t" style="left:13.50px;top:529.86px;font-size:6.60px;letter-spacing:-0.172px;color:#b8b8b8;">Select</div>
<svg style="left:33.4px;top:527.5px;" width="7" height="10" viewBox="0 0 7 10"><rect x="0.6" y="0.6" width="5.6" height="8.4" rx="2" fill="none" stroke="#bbb" stroke-width="0.8"/><rect x="2.6" y="1.2" width="1.6" height="3.6" rx="0.6" fill="#ddd"/></svg>
<div class="t" style="left:41.00px;top:529.86px;font-size:6.60px;letter-spacing:-0.172px;color:#b8b8b8;">Rotate View</div>
<svg style="left:78.4px;top:527.5px;" width="7" height="10" viewBox="0 0 7 10"><rect x="0.6" y="0.6" width="5.6" height="8.4" rx="2" fill="none" stroke="#bbb" stroke-width="0.8"/><rect x="3.3" y="1" width="2.5" height="3.6" rx="0.8" fill="#ddd"/></svg>
<div class="t" style="left:86.00px;top:529.86px;font-size:6.60px;letter-spacing:-0.172px;color:#b8b8b8;">Options</div>
<svg style="left:965px;top:527.5px;" width="10" height="10" viewBox="0 0 10 10"><path d="M1.5 5 Q4.5 1 8 5 Q4.5 9 1.5 5 Z" fill="none" stroke="#999" stroke-width="0.8"/><path d="M1 1 L8.5 9" stroke="#999" stroke-width="0.8"/></svg>
<div class="a" style="left:977.8px;top:528.5px;width:0.7px;height:8px;background:#888;"></div>
<div class="t" style="left:981.20px;top:529.86px;font-size:6.60px;letter-spacing:-0.172px;color:#b8b8b8;">4.5.0</div>
</body></html>
